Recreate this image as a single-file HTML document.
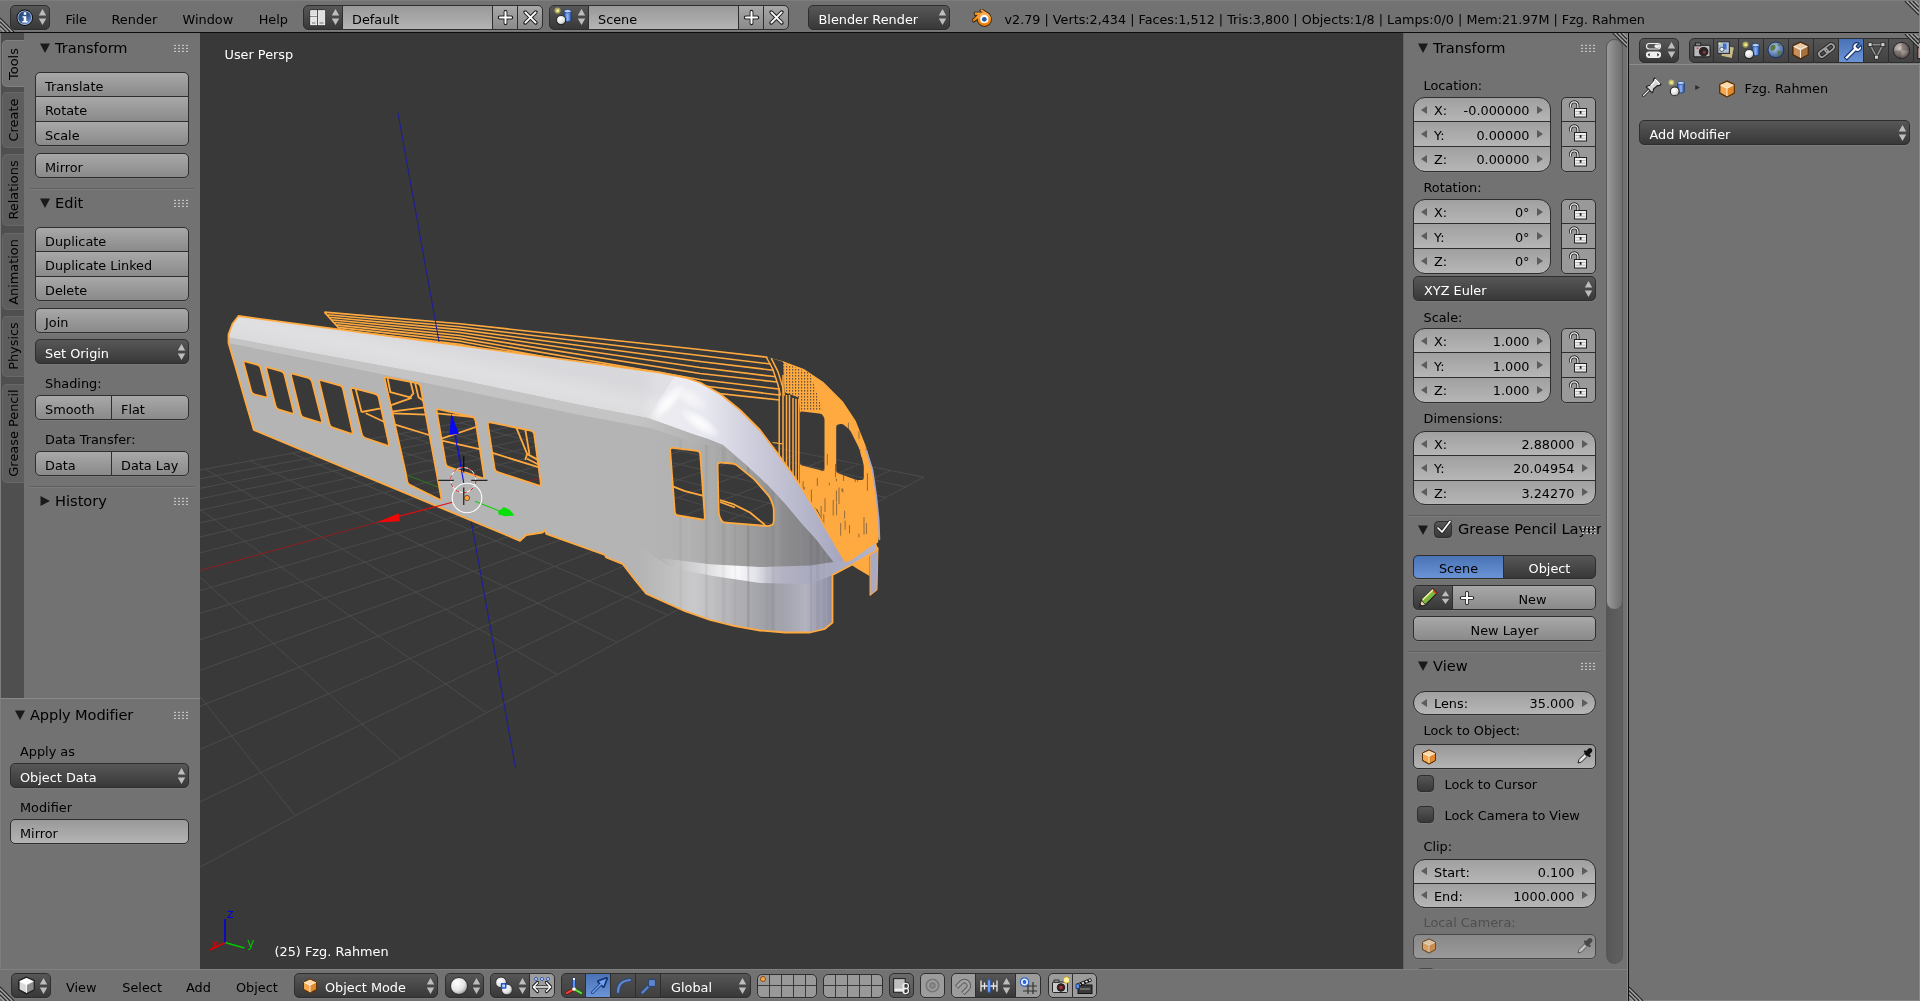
<!DOCTYPE html><html><head><meta charset="utf-8"><title>Blender</title><style>
*{box-sizing:border-box}
html,body{margin:0;padding:0}
body{width:1920px;height:1001px;position:relative;overflow:hidden;background:#727272;font-family:"DejaVu Sans","Liberation Sans",sans-serif;font-size:12.85px;color:#000;line-height:1}
.a{position:absolute}
.w{position:absolute;border:1px solid #2e2e2e;white-space:nowrap;overflow:hidden;display:flex;align-items:center;box-shadow:0 1px 0 rgba(255,255,255,.06)}
.tool{background:linear-gradient(#a8a8a8,#8a8a8a)}
.num{background:linear-gradient(#a0a0a0,#b6b6b6)}
.menu{background:linear-gradient(#575757,#383838);color:#fff}
.txt{background:linear-gradient(#999,#b4b4b4)}
.tog{background:#999}
.sel{background:linear-gradient(#4a72b6,#6a94d6)}
.chk{background:linear-gradient(#565656,#383838)}
.lbl{position:absolute;white-space:nowrap;height:20px;line-height:20px}
.ph{position:absolute;white-space:nowrap;font-size:14.6px;height:20px;line-height:20px}
.sep{position:absolute;height:1px;background:#5e5e5e;box-shadow:0 1px 0 #7c7c7c}
.tab{position:absolute;left:2px;width:22px;background:#5d5d5d;border:1px solid #686868;border-right:none;border-radius:5px 0 0 5px}
.tab span{position:absolute;left:50%;top:50%;white-space:nowrap;transform:translate(-50%,-50%) rotate(-90deg);font-size:12.9px;margin-left:.7px}
.tab.on{background:#727272;border-color:#808080}
.ud{position:absolute;width:9px;height:15px}
</style></head><body><div id="root" style="position:absolute;left:0;top:0;width:1920px;height:1001px;will-change:transform"><svg width="0" height="0" style="position:absolute"><defs>
<linearGradient id="gInfo" x1="0" y1="0" x2=".6" y2="1"><stop offset="0" stop-color="#1f3f78"/><stop offset=".6" stop-color="#33568e"/><stop offset="1" stop-color="#6a8ec8"/></linearGradient>
<radialGradient id="gSph" cx=".38" cy=".32" r=".75"><stop offset="0" stop-color="#fff"/><stop offset=".6" stop-color="#e4e4e4"/><stop offset="1" stop-color="#8c8c8c"/></radialGradient>
<radialGradient id="gSphD" cx=".38" cy=".32" r=".75"><stop offset="0" stop-color="#bbb"/><stop offset="1" stop-color="#4a4a4a"/></radialGradient>
<linearGradient id="gCyl" x1="0" x2="1"><stop offset="0" stop-color="#2d59b8"/><stop offset=".5" stop-color="#8db4f4"/><stop offset="1" stop-color="#2a4f9d"/></linearGradient>
<radialGradient id="gEarth" cx=".4" cy=".35" r=".75"><stop offset="0" stop-color="#b4c8e2"/><stop offset=".6" stop-color="#5f80b4"/><stop offset="1" stop-color="#2c4470"/></radialGradient>
<radialGradient id="gMat" cx=".4" cy=".35" r=".75"><stop offset="0" stop-color="#d0c4c0"/><stop offset=".6" stop-color="#8c807c"/><stop offset="1" stop-color="#3c3434"/></radialGradient>
<linearGradient id="gBl" x1="0" y1="0" x2="0" y2="1"><stop offset="0" stop-color="#fbb868"/><stop offset=".5" stop-color="#f4901e"/><stop offset="1" stop-color="#ea7a00"/></linearGradient>
</defs></svg>
<div class="a" style="left:200px;top:33px;width:1203px;height:936px;background:#393939;overflow:hidden">
<svg style="position:absolute;left:-200px;top:-33px" width="1920" height="1001" viewBox="0 0 1920 1001" font-family="DejaVu Sans, Liberation Sans, sans-serif">
<defs>
<linearGradient id="roofG" gradientUnits="userSpaceOnUse" x1="400" y1="337" x2="391" y2="379"><stop offset="0" stop-color="#d4d4d8" stop-opacity=".5"/><stop offset=".4" stop-color="#e4e4e6" stop-opacity=".3"/><stop offset="1" stop-color="#cfcfd1" stop-opacity=".5"/></linearGradient><linearGradient id="lightG" gradientUnits="userSpaceOnUse" x1="228" y1="0" x2="845" y2="0"><stop offset="0" stop-color="#dedee1"/><stop offset=".67" stop-color="#dddde0"/><stop offset=".70" stop-color="#ebebf0"/><stop offset=".77" stop-color="#e9e9f1"/><stop offset=".85" stop-color="#cdcddc"/><stop offset=".93" stop-color="#b8b8cc"/><stop offset="1" stop-color="#a4a4be"/></linearGradient><linearGradient id="stripG" gradientUnits="userSpaceOnUse" x1="228" y1="0" x2="845" y2="0"><stop offset="0" stop-color="#c4c4c5"/><stop offset=".66" stop-color="#c4c4c5"/><stop offset=".73" stop-color="#b8b8b9"/><stop offset=".82" stop-color="#a4a4a6"/><stop offset=".92" stop-color="#909094"/><stop offset="1" stop-color="#88888e"/></linearGradient>
<linearGradient id="noseG" gradientUnits="userSpaceOnUse" x1="650" y1="0" x2="835" y2="0"><stop offset="0" stop-color="#b4b4b4"/><stop offset=".25" stop-color="#b0b0b0"/><stop offset=".5" stop-color="#a0a0a1"/><stop offset=".75" stop-color="#8b8b8e"/><stop offset="1" stop-color="#7a7a82"/></linearGradient>
<linearGradient id="skirtG" gradientUnits="userSpaceOnUse" x1="640" y1="0" x2="835" y2="0"><stop offset="0" stop-color="#b4b4b4"/><stop offset=".28" stop-color="#c9c9cb"/><stop offset=".5" stop-color="#b0b0b4"/><stop offset=".68" stop-color="#9c9ca4"/><stop offset=".85" stop-color="#b2b2c0"/><stop offset="1" stop-color="#8888a0"/></linearGradient>
<linearGradient id="beltG" gradientUnits="userSpaceOnUse" x1="660" y1="0" x2="878" y2="0"><stop offset="0" stop-color="#b4b4b4"/><stop offset=".18" stop-color="#d6d6d8"/><stop offset=".35" stop-color="#fafafc"/><stop offset=".44" stop-color="#e2e2ea"/><stop offset=".53" stop-color="#b4b4c4"/><stop offset=".75" stop-color="#a6a6bc"/><stop offset="1" stop-color="#b4b4cc"/></linearGradient>

<radialGradient id="hiS"><stop offset="0" stop-color="#fff" stop-opacity=".95"/><stop offset=".5" stop-color="#fff" stop-opacity=".6"/><stop offset="1" stop-color="#fff" stop-opacity="0"/></radialGradient>
<pattern id="dots" width="3" height="3" patternUnits="userSpaceOnUse"><rect x="0" y="0" width="1.2" height="1.6" fill="#393939" opacity=".75"/></pattern>
</defs>
<path d="M559.0 404.8 L923.8 477.1 M559.0 404.8 L-96.2 523.7 M536.5 408.9 L905.9 486.8 M574.4 407.8 L-94.2 534.4 M512.5 413.2 L886.2 497.4 M590.4 411.0 L-92.0 546.1 M487.1 417.8 L864.6 509.0 M607.1 414.3 L-89.7 558.9 M459.9 422.8 L840.6 521.9 M624.7 417.8 L-87.1 572.8 M430.9 428.0 L813.9 536.3 M643.1 421.4 L-84.2 588.1 M399.9 433.7 L784.0 552.5 M662.3 425.3 L-81.1 605.1 M366.6 439.7 L750.3 570.6 M682.6 429.3 L-77.6 623.9 M292.1 453.2 L667.9 615.0 M726.3 437.9 L-69.3 668.6 M250.3 460.8 L617.0 642.4 M749.9 442.6 L-64.3 695.5 M204.9 469.0 L557.3 674.6 M774.8 447.6 L-58.6 726.1 M155.5 478.0 L486.4 712.8 M801.2 452.8 L-52.0 761.4 M101.4 487.8 L400.7 759.0 M829.1 458.3 L-44.4 802.6 M42.0 498.6 L295.2 815.8 M858.8 464.2 L-35.3 851.3 M-23.5 510.5 L162.1 887.6 M890.3 470.5 L-24.5 909.7 M-96.2 523.7 L-11.2 981.0 M923.8 477.1 L-11.2 981.0" stroke="#4b4b4b" stroke-width="1" fill="none"/><path d="M703.9 433.5 L-73.7 645.0" stroke="#8e1f1f" stroke-width="1"/><path d="M330.8 446.2 L711.9 591.3" stroke="#2a7a1e" stroke-width="1"/>
<path d="M324.4 312.1 L460.0 323.8 L700.0 349.5 L767.5 357.3 M326.7 314.7 L460.0 326.7 L700.0 355.5 L770.8 364.0 M329.0 317.2 L460.0 329.6 L700.0 361.5 L773.4 370.3 M331.3 319.8 L460.0 332.5 L700.0 367.5 L775.6 376.8 M333.6 322.3 L460.0 335.5 L700.0 373.5 L777.0 382.0 M335.9 324.9 L460.0 338.4 L700.0 379.5 L778.3 389.0 M338.2 327.4 L460.0 341.3 L700.0 385.5 L779.2 395.0 M340.5 330.0 L460.0 344.3 L700.0 391.5 L779.5 400.0 M324.4 312.1 L340.5 330" stroke="#ffaa40" stroke-width="1.6" fill="none"/>
<path d="M766.2 357.0 L772.7 369.0 L777.9 384.5 L780.5 395.6 M771.2 358.1 L777.9 371.6 L783.1 388.4 L784.4 395.6" stroke="#ffaa40" stroke-width="1.5" fill="none"/>
<clipPath id="farclip"><path d="M767.5 357.3 L783.1 361.2 L803.9 369.0 L823.4 381.9 L842.9 401.4 L855.8 420.9 L866.2 446.9 L872.5 470.0 L876.2 495.0 L878.8 520.0 L879.5 540.0 L880.0 530.0 L878.0 542.5 L850.0 560.0 L842.5 560.0 L835.0 547.5 L817.5 510.0 L806.2 500.0 L800.0 490.0 L800.0 411.2 L798.8 397.5 L784.5 392.2 L783.0 361.8 Z"/></clipPath>
<path d="M767.5 357.3 L783.1 361.2 L803.9 369.0 L823.4 381.9 L842.9 401.4 L855.8 420.9 L866.2 446.9 L872.5 470.0 L876.2 495.0 L878.8 520.0 L879.5 540.0 L880.0 530.0 L878.0 542.5 L850.0 560.0 L842.5 560.0 L835.0 547.5 L817.5 510.0 L806.2 500.0 L800.0 490.0 L800.0 411.2 L798.8 397.5 L784.5 392.2 L783.0 361.8 Z M800.0 413.2 Q800.0 411.2 802.0 411.5 L819.3 413.5 Q821.2 413.8 822.6 415.3 L823.2 416.0 Q824.5 417.5 824.5 419.5 L824.5 469.2 Q824.5 471.2 822.6 470.8 L801.9 465.5 Q800.0 465.0 800.0 463.0 Z M836.2 427.0 Q836.2 425.0 838.2 424.6 L840.5 424.1 Q842.5 423.8 844.0 425.0 L848.5 428.7 Q850.0 430.0 850.9 431.8 L857.9 445.7 Q858.8 447.5 859.3 449.4 L863.2 463.1 Q863.8 465.0 863.8 467.0 L863.8 478.0 Q863.8 480.0 861.8 480.0 L858.2 480.0 Q856.2 480.0 854.4 479.3 L838.1 473.2 Q836.2 472.5 836.2 470.5 Z" fill="#ffaa40" fill-rule="evenodd"/>
<path d="M783.0 362.5 L810.0 373.0 L822.5 410.0 L800.0 411.2 L798.8 397.5 L784.5 392.2 Z" fill="url(#dots)"/>
<path d="M779.2 388.0 L779.2 507.5 M783.0 375.0 L783.0 507.5 M786.5 395.0 L786.5 507.5 M789.5 395.0 L789.5 507.5 M793.0 398.0 L793.0 507.5 M796.0 398.8 L796.0 507.5 M798.8 398.8 L798.8 507.5" stroke="#ffaa40" stroke-width="1.5" fill="none"/>
<path d="M772.5 442.5 L782.5 443.8 M793.8 512.5 L807.5 517.5" stroke="#ffaa40" stroke-width="1.2"/>
<path d="M817.3 478.0 v8.0 M842.0 488.2 v3.5 M802.1 514.7 v6.4 M817.1 534.5 v9.6 M857.7 469.5 v12.1 M811.4 489.4 v15.5 M836.6 502.7 v12.6 M805.6 504.8 v11.4 M821.6 413.9 v15.5 M833.2 499.9 v15.7 M849.5 525.1 v8.4 M855.3 465.6 v16.5 M860.6 422.2 v4.5 M815.9 530.7 v9.0 M843.5 447.6 v10.1 M827.3 453.9 v11.3 M840.7 523.0 v12.7 M864.0 517.1 v17.4 M846.6 430.4 v15.4 M866.4 523.1 v11.0 M849.4 436.4 v15.0 M840.0 445.6 v3.5 M858.9 533.7 v3.8 M855.3 461.3 v4.8 M821.1 506.1 v15.6 M804.2 486.8 v3.2 M849.7 451.4 v15.7 M867.4 473.2 v17.5 M822.2 419.6 v11.5 M803.4 434.7 v8.6 M842.5 429.5 v3.1 M859.8 449.2 v16.9 M861.8 457.2 v9.4 M836.4 490.5 v11.4 M839.0 487.5 v16.6 M835.5 463.9 v13.3 M817.3 447.6 v17.2 M836.4 478.6 v2.7 M829.3 482.5 v2.8 M842.8 489.0 v3.4 M843.6 468.3 v12.7 M825.0 498.4 v13.6 M802.7 417.6 v12.6 M866.3 441.4 v9.3 M841.3 450.0 v8.0 M822.4 456.1 v11.4 M821.5 457.1 v14.1 M803.1 481.2 v13.5 M822.2 437.8 v14.6 M817.4 433.4 v9.0 M848.4 422.7 v7.3 M823.8 514.2 v9.1 M859.0 431.2 v7.6 M845.1 520.6 v9.3 M816.4 425.1 v10.4 M814.1 510.8 v15.1 M813.6 444.8 v14.6 M844.6 510.8 v7.7 M810.0 446.5 v14.4 M819.6 453.3 v8.8" stroke="#3a3a3a" stroke-width=".7" fill="none" opacity=".8" clip-path="url(#farclip)"/>
<path d="M849.5 563.5 L869.5 554 L869.5 576 L856 568 Z" fill="#ffaa40"/>
<path d="M866.2 450.0 L872.5 470.0 L876.2 495.0 L878.8 520.0 L879.5 540.0" stroke="#a6a6c6" stroke-width="1.6" fill="none"/>
<path d="M870.0 551.2 L878.0 547.5 L877.0 590.0 L870.0 595.5 Z" fill="#a9a9c4" stroke="#ffaa40" stroke-width="1"/>
<path d="M398 113 L515.5 768" stroke="#1c1c9c" stroke-width="1"/>
<path d="M357.4 388.9 L376.0 393.0 L379.0 397.0 L382.0 410.2 M361.6 412.0 L382.0 408.1 M365.8 413.2 L385.0 422.2 M355.6 388.6 L361.6 412.2 M387.4 377.2 L390.4 392.2 L410.1 397.3 L413.4 393.4 L410.5 381.8 M414.9 382.0 L418.5 397.3 L423.7 400.9 M389.8 405.7 L411.7 397.8 M391.3 411.7 L424.5 407.4 M391.8 413.4 L426.1 414.6 M393.6 424.2 L429.0 435.0 M436.5 413.4 L473.3 417.0 M440.7 438.9 L476.1 427.0 M441.9 440.7 L479.7 449.1 M516.3 427.6 L527.1 453.9 L537.8 459.9 M525.3 429.4 L529.4 453.9 M527.1 458.7 L539.3 465.0 M491.7 452.7 L539.0 467.4 M527.1 453.9 L525.3 459.9 M672.0 486.2 L685.0 491.2 L704.5 496.2 M720.0 500.0 L732.5 503.8 L750.0 512.5 L765.0 525.0 M720.0 502.0 L735.0 507.5" stroke="#ffaa40" stroke-width="1.8" fill="none" stroke-linejoin="round"/>
<clipPath id="bodyclip" clip-rule="evenodd"><path d="M238.5 316.0 L560.0 358.8 L660.0 372.5 L685.0 377.5 L700.0 382.5 L720.0 393.8 L740.0 410.0 L760.0 430.0 L777.0 452.5 L792.0 473.5 L804.0 491.5 L816.0 511.0 L828.0 532.0 L838.5 550.0 L845.0 561.0 L850.0 560.0 L875.0 542.5 L877.5 550.0 L853.8 563.8 L832.5 575.0 L832.5 622.5 L825.0 628.8 L810.0 632.5 L785.0 632.5 L760.0 630.5 L735.0 626.2 L710.0 620.0 L685.0 611.2 L660.0 600.0 L646.2 593.8 L635.0 580.0 L622.5 563.8 L606.2 557.5 L605.0 555.0 L546.2 533.8 L545.0 530.0 L542.5 532.5 L526.2 535.0 L520.0 540.8 L253.8 430.0 L245.0 400.0 L235.0 365.0 L228.5 343.0 L228.5 334.4 L232.5 323.8 Z M243.8 363.6 Q243.0 360.8 245.9 361.6 L257.1 364.7 Q260.0 365.5 260.7 368.4 L267.3 395.1 Q268.0 398.0 265.1 397.2 L254.9 394.5 Q252.0 393.8 251.2 390.9 Z M266.5 369.7 Q265.8 366.8 268.6 367.6 L280.9 371.2 Q283.8 372.0 284.5 374.9 L293.5 411.3 Q294.2 414.2 291.4 413.4 L279.1 409.6 Q276.2 408.8 275.5 405.8 Z M291.2 375.9 Q290.5 373.0 293.4 373.8 L308.4 377.9 Q311.2 378.8 312.0 381.7 L321.8 420.3 Q322.5 423.2 319.6 422.4 L304.1 417.6 Q301.2 416.8 300.5 413.8 Z M319.4 382.4 Q318.8 379.5 321.6 380.3 L339.6 385.4 Q342.5 386.2 343.1 389.2 L352.4 431.3 Q353.0 434.2 350.1 433.3 L332.9 427.7 Q330.0 426.8 329.3 423.8 Z M351.2 390.4 Q350.5 387.5 353.4 388.2 L375.1 393.8 Q378.0 394.5 378.7 397.4 L388.8 443.3 Q389.5 446.2 386.7 445.3 L365.3 438.0 Q362.5 437.0 361.8 434.1 Z M384.9 379.7 Q384.2 376.8 387.2 377.3 L417.1 383.2 Q420.0 383.8 420.5 386.7 L441.2 497.6 Q441.8 500.5 439.1 499.2 L410.2 485.1 Q407.5 483.8 407.1 480.8 L406.7 478.0 Q406.2 475.0 405.6 472.1 Z M436.8 411.7 Q436.2 408.8 439.2 409.4 L472.1 416.8 Q475.0 417.5 475.5 420.5 L484.0 475.8 Q484.5 478.8 481.6 477.8 L449.1 467.2 Q446.2 466.2 445.7 463.3 Z M487.9 424.7 Q487.5 421.8 490.4 422.4 L530.8 430.6 Q533.8 431.2 534.2 434.2 L540.8 483.3 Q541.2 486.2 538.4 485.3 L497.9 472.2 Q495.0 471.2 494.6 468.3 Z M670.2 450.5 Q670.0 447.5 673.0 447.9 L697.0 450.9 Q700.0 451.2 700.2 454.2 L704.8 517.0 Q705.0 520.0 702.0 519.5 L678.0 515.5 Q675.0 515.0 674.8 512.0 Z M717.6 465.5 Q717.5 462.5 720.5 462.7 L732.0 463.5 Q735.0 463.8 737.3 465.6 L752.7 478.1 Q755.0 480.0 757.0 482.3 L768.0 495.2 Q770.0 497.5 771.1 500.3 L772.7 504.7 Q773.8 507.5 773.8 510.5 L773.8 520.8 Q773.8 523.8 772.1 524.9 L771.7 525.1 Q770.0 526.2 767.0 526.0 L725.5 522.7 Q722.5 522.5 721.2 519.8 L720.1 517.7 Q718.8 515.0 718.7 512.0 Z" clip-rule="evenodd"/></clipPath>
<path d="M238.5 316.0 L560.0 358.8 L660.0 372.5 L685.0 377.5 L700.0 382.5 L720.0 393.8 L740.0 410.0 L760.0 430.0 L777.0 452.5 L792.0 473.5 L804.0 491.5 L816.0 511.0 L828.0 532.0 L838.5 550.0 L845.0 561.0 L850.0 560.0 L875.0 542.5 L877.5 550.0 L853.8 563.8 L832.5 575.0 L832.5 622.5 L825.0 628.8 L810.0 632.5 L785.0 632.5 L760.0 630.5 L735.0 626.2 L710.0 620.0 L685.0 611.2 L660.0 600.0 L646.2 593.8 L635.0 580.0 L622.5 563.8 L606.2 557.5 L605.0 555.0 L546.2 533.8 L545.0 530.0 L542.5 532.5 L526.2 535.0 L520.0 540.8 L253.8 430.0 L245.0 400.0 L235.0 365.0 L228.5 343.0 L228.5 334.4 L232.5 323.8 Z M243.8 363.6 Q243.0 360.8 245.9 361.6 L257.1 364.7 Q260.0 365.5 260.7 368.4 L267.3 395.1 Q268.0 398.0 265.1 397.2 L254.9 394.5 Q252.0 393.8 251.2 390.9 Z M266.5 369.7 Q265.8 366.8 268.6 367.6 L280.9 371.2 Q283.8 372.0 284.5 374.9 L293.5 411.3 Q294.2 414.2 291.4 413.4 L279.1 409.6 Q276.2 408.8 275.5 405.8 Z M291.2 375.9 Q290.5 373.0 293.4 373.8 L308.4 377.9 Q311.2 378.8 312.0 381.7 L321.8 420.3 Q322.5 423.2 319.6 422.4 L304.1 417.6 Q301.2 416.8 300.5 413.8 Z M319.4 382.4 Q318.8 379.5 321.6 380.3 L339.6 385.4 Q342.5 386.2 343.1 389.2 L352.4 431.3 Q353.0 434.2 350.1 433.3 L332.9 427.7 Q330.0 426.8 329.3 423.8 Z M351.2 390.4 Q350.5 387.5 353.4 388.2 L375.1 393.8 Q378.0 394.5 378.7 397.4 L388.8 443.3 Q389.5 446.2 386.7 445.3 L365.3 438.0 Q362.5 437.0 361.8 434.1 Z M384.9 379.7 Q384.2 376.8 387.2 377.3 L417.1 383.2 Q420.0 383.8 420.5 386.7 L441.2 497.6 Q441.8 500.5 439.1 499.2 L410.2 485.1 Q407.5 483.8 407.1 480.8 L406.7 478.0 Q406.2 475.0 405.6 472.1 Z M436.8 411.7 Q436.2 408.8 439.2 409.4 L472.1 416.8 Q475.0 417.5 475.5 420.5 L484.0 475.8 Q484.5 478.8 481.6 477.8 L449.1 467.2 Q446.2 466.2 445.7 463.3 Z M487.9 424.7 Q487.5 421.8 490.4 422.4 L530.8 430.6 Q533.8 431.2 534.2 434.2 L540.8 483.3 Q541.2 486.2 538.4 485.3 L497.9 472.2 Q495.0 471.2 494.6 468.3 Z M670.2 450.5 Q670.0 447.5 673.0 447.9 L697.0 450.9 Q700.0 451.2 700.2 454.2 L704.8 517.0 Q705.0 520.0 702.0 519.5 L678.0 515.5 Q675.0 515.0 674.8 512.0 Z M717.6 465.5 Q717.5 462.5 720.5 462.7 L732.0 463.5 Q735.0 463.8 737.3 465.6 L752.7 478.1 Q755.0 480.0 757.0 482.3 L768.0 495.2 Q770.0 497.5 771.1 500.3 L772.7 504.7 Q773.8 507.5 773.8 510.5 L773.8 520.8 Q773.8 523.8 772.1 524.9 L771.7 525.1 Q770.0 526.2 767.0 526.0 L725.5 522.7 Q722.5 522.5 721.2 519.8 L720.1 517.7 Q718.8 515.0 718.7 512.0 Z" fill="#b4b4b4" fill-rule="evenodd"/>
<g clip-path="url(#bodyclip)"><clipPath id="sideclip"><path d="M650.0 428.1 L675.0 436.2 L700.0 444.0 L723.0 447.0 L745.5 464.5 L768.0 485.5 L786.0 505.0 L801.0 523.0 L816.0 539.5 L827.0 554.0 L835.0 564.0 L832.5 575.0 L810.0 583.8 L760.0 582.5 L710.0 575.0 L672.5 567.5 L655.0 557.5 L635.0 525.0 L640.0 440.0 Z M635.0 540.0 L655.0 557.5 L672.5 567.5 L710.0 575.0 L760.0 582.5 L810.0 583.8 L832.5 575.0 L832.5 622.5 L825.0 628.8 L810.0 632.5 L785.0 632.5 L760.0 630.5 L735.0 626.2 L710.0 620.0 L685.0 611.2 L660.0 600.0 L646.2 593.8 L635.0 580.0 Z"/></clipPath>
<path d="M238.5 316.0 L560.0 358.8 L660.0 372.5 L685.0 377.5 L700.0 382.5 L720.0 393.8 L740.0 410.0 L760.0 430.0 L777.0 452.5 L792.0 473.5 L804.0 491.5 L816.0 511.0 L828.0 532.0 L838.5 550.0 L845.0 561.0 L835.0 564.0 L827.0 554.0 L816.0 539.5 L801.0 523.0 L786.0 505.0 L768.0 485.5 L745.5 464.5 L723.0 445.0 L708.0 439.0 L692.5 434.0 L667.5 425.0 L647.5 418.1 L580.0 405.0 L460.0 380.0 L228.5 337.5 L228.5 334.4 L232.5 323.8 Z" fill="url(#lightG)"/>
<path d="M238.5 316.0 L560.0 358.8 L660.0 372.5 L675.0 376.0 L647.5 418.1 L580.0 405.0 L460.0 380.0 L228.5 337.5 L228.5 334.4 L232.5 323.8 Z" fill="url(#roofG)"/>
<path d="M228.5 337.5 L460.0 380.0 L580.0 405.0 L647.5 418.1 L667.5 425.0 L692.5 434.0 L708.0 439.0 L723.0 445.0 L745.5 464.5 L768.0 485.5 L786.0 505.0 L801.0 523.0 L816.0 539.5 L827.0 554.0 L835.0 564.0 L723.0 447.0 L700.0 444.0 L675.0 436.2 L650.0 428.1 L580.0 415.0 L460.0 390.0 L228.5 343.0 Z" fill="url(#stripG)"/>
<path d="M650.0 428.1 L675.0 436.2 L700.0 444.0 L723.0 447.0 L745.5 464.5 L768.0 485.5 L786.0 505.0 L801.0 523.0 L816.0 539.5 L827.0 554.0 L835.0 564.0 L832.5 575.0 L810.0 583.8 L760.0 582.5 L710.0 575.0 L672.5 567.5 L655.0 557.5 L635.0 525.0 L640.0 440.0 Z" fill="url(#noseG)"/>
<ellipse cx="668" cy="402" rx="25" ry="8" transform="rotate(-48 668 402)" fill="url(#hiS)"/>
<ellipse cx="700" cy="423" rx="24" ry="8" transform="rotate(34 700 423)" fill="url(#hiS)"/>
<ellipse cx="690" cy="398" rx="20" ry="9" transform="rotate(30 690 398)" fill="url(#hiS)" opacity=".6"/>
<path d="M635.0 540.0 L655.0 557.5 L672.5 567.5 L710.0 575.0 L760.0 582.5 L810.0 583.8 L832.5 575.0 L832.5 622.5 L825.0 628.8 L810.0 632.5 L785.0 632.5 L760.0 630.5 L735.0 626.2 L710.0 620.0 L685.0 611.2 L660.0 600.0 L646.2 593.8 L635.0 580.0 Z" fill="url(#skirtG)"/>
<path d="M660.0 558.0 L710.0 564.2 L760.0 567.0 L810.0 565.5 L830.0 562.5 L850.0 560.0 L875.0 542.5 L877.5 550.0 L853.8 563.8 L832.5 575.0 L810.0 584.2 L760.0 583.0 L710.0 575.5 L672.5 568.0 Z" fill="url(#beltG)"/>
<path d="M720.5 440 V640" stroke="#fff" stroke-opacity="0.03" stroke-width="1.6" clip-path="url(#sideclip)"/>
<path d="M801.0 440 V640" stroke="#fff" stroke-opacity="0.03" stroke-width="1.6" clip-path="url(#sideclip)"/>
<path d="M750.2 440 V640" stroke="#fff" stroke-opacity="0.02" stroke-width="2.5" clip-path="url(#sideclip)"/>
<path d="M707.0 440 V640" stroke="#000" stroke-opacity="0.02" stroke-width="2.9" clip-path="url(#sideclip)"/>
<path d="M821.5 440 V640" stroke="#fff" stroke-opacity="0.04" stroke-width="2.5" clip-path="url(#sideclip)"/>
<path d="M826.2 440 V640" stroke="#fff" stroke-opacity="0.04" stroke-width="1.8" clip-path="url(#sideclip)"/>
<path d="M735.9 440 V640" stroke="#fff" stroke-opacity="0.04" stroke-width="2.9" clip-path="url(#sideclip)"/>
<path d="M778.5 440 V640" stroke="#fff" stroke-opacity="0.04" stroke-width="3.1" clip-path="url(#sideclip)"/>
<path d="M728.3 440 V640" stroke="#fff" stroke-opacity="0.04" stroke-width="3.0" clip-path="url(#sideclip)"/>
<path d="M748.4 440 V640" stroke="#000" stroke-opacity="0.05" stroke-width="2.7" clip-path="url(#sideclip)"/>
<path d="M817.6 440 V640" stroke="#000" stroke-opacity="0.03" stroke-width="3.5" clip-path="url(#sideclip)"/>
<path d="M781.2 440 V640" stroke="#fff" stroke-opacity="0.02" stroke-width="2.3" clip-path="url(#sideclip)"/>
<path d="M748.2 440 V640" stroke="#000" stroke-opacity="0.05" stroke-width="2.2" clip-path="url(#sideclip)"/>
<path d="M826.8 440 V640" stroke="#fff" stroke-opacity="0.04" stroke-width="1.9" clip-path="url(#sideclip)"/>
<path d="M723.4 440 V640" stroke="#000" stroke-opacity="0.03" stroke-width="3.9" clip-path="url(#sideclip)"/>
<path d="M680.6 440 V640" stroke="#000" stroke-opacity="0.03" stroke-width="2.4" clip-path="url(#sideclip)"/>
<path d="M748.5 440 V640" stroke="#000" stroke-opacity="0.02" stroke-width="1.7" clip-path="url(#sideclip)"/>
<path d="M711.7 440 V640" stroke="#fff" stroke-opacity="0.02" stroke-width="3.3" clip-path="url(#sideclip)"/>
<path d="M772.8 440 V640" stroke="#000" stroke-opacity="0.03" stroke-width="2.5" clip-path="url(#sideclip)"/>
<path d="M776.3 440 V640" stroke="#fff" stroke-opacity="0.05" stroke-width="2.4" clip-path="url(#sideclip)"/>
<path d="M767.0 440 V640" stroke="#000" stroke-opacity="0.02" stroke-width="3.4" clip-path="url(#sideclip)"/>
<path d="M689.0 440 V640" stroke="#fff" stroke-opacity="0.03" stroke-width="3.8" clip-path="url(#sideclip)"/>
<path d="M748.4 440 V640" stroke="#fff" stroke-opacity="0.04" stroke-width="2.9" clip-path="url(#sideclip)"/>
<path d="M811.1 440 V640" stroke="#000" stroke-opacity="0.05" stroke-width="2.2" clip-path="url(#sideclip)"/>
<path d="M735.3 440 V640" stroke="#000" stroke-opacity="0.04" stroke-width="2.5" clip-path="url(#sideclip)"/>
<path d="M705.4 440 V640" stroke="#fff" stroke-opacity="0.03" stroke-width="2.1" clip-path="url(#sideclip)"/>
<path d="M705.8 440 V640" stroke="#000" stroke-opacity="0.05" stroke-width="2.0" clip-path="url(#sideclip)"/>
<path d="M713.7 440 V640" stroke="#fff" stroke-opacity="0.03" stroke-width="2.4" clip-path="url(#sideclip)"/></g>
<path d="M238.5 316.0 L560.0 358.8 L660.0 372.5 L685.0 377.5 L700.0 382.5 L720.0 393.8 L740.0 410.0 L760.0 430.0 L777.0 452.5 L792.0 473.5 L804.0 491.5 L816.0 511.0 L828.0 532.0 L838.5 550.0 L845.0 561.0 L850.0 560.0 L875.0 542.5 L877.5 550.0 L853.8 563.8 L832.5 575.0 L832.5 622.5 L825.0 628.8 L810.0 632.5 L785.0 632.5 L760.0 630.5 L735.0 626.2 L710.0 620.0 L685.0 611.2 L660.0 600.0 L646.2 593.8 L635.0 580.0 L622.5 563.8 L606.2 557.5 L605.0 555.0 L546.2 533.8 L545.0 530.0 L542.5 532.5 L526.2 535.0 L520.0 540.8 L253.8 430.0 L245.0 400.0 L235.0 365.0 L228.5 343.0 L228.5 334.4 L232.5 323.8 Z M243.8 363.6 Q243.0 360.8 245.9 361.6 L257.1 364.7 Q260.0 365.5 260.7 368.4 L267.3 395.1 Q268.0 398.0 265.1 397.2 L254.9 394.5 Q252.0 393.8 251.2 390.9 Z M266.5 369.7 Q265.8 366.8 268.6 367.6 L280.9 371.2 Q283.8 372.0 284.5 374.9 L293.5 411.3 Q294.2 414.2 291.4 413.4 L279.1 409.6 Q276.2 408.8 275.5 405.8 Z M291.2 375.9 Q290.5 373.0 293.4 373.8 L308.4 377.9 Q311.2 378.8 312.0 381.7 L321.8 420.3 Q322.5 423.2 319.6 422.4 L304.1 417.6 Q301.2 416.8 300.5 413.8 Z M319.4 382.4 Q318.8 379.5 321.6 380.3 L339.6 385.4 Q342.5 386.2 343.1 389.2 L352.4 431.3 Q353.0 434.2 350.1 433.3 L332.9 427.7 Q330.0 426.8 329.3 423.8 Z M351.2 390.4 Q350.5 387.5 353.4 388.2 L375.1 393.8 Q378.0 394.5 378.7 397.4 L388.8 443.3 Q389.5 446.2 386.7 445.3 L365.3 438.0 Q362.5 437.0 361.8 434.1 Z M384.9 379.7 Q384.2 376.8 387.2 377.3 L417.1 383.2 Q420.0 383.8 420.5 386.7 L441.2 497.6 Q441.8 500.5 439.1 499.2 L410.2 485.1 Q407.5 483.8 407.1 480.8 L406.7 478.0 Q406.2 475.0 405.6 472.1 Z M436.8 411.7 Q436.2 408.8 439.2 409.4 L472.1 416.8 Q475.0 417.5 475.5 420.5 L484.0 475.8 Q484.5 478.8 481.6 477.8 L449.1 467.2 Q446.2 466.2 445.7 463.3 Z M487.9 424.7 Q487.5 421.8 490.4 422.4 L530.8 430.6 Q533.8 431.2 534.2 434.2 L540.8 483.3 Q541.2 486.2 538.4 485.3 L497.9 472.2 Q495.0 471.2 494.6 468.3 Z M670.2 450.5 Q670.0 447.5 673.0 447.9 L697.0 450.9 Q700.0 451.2 700.2 454.2 L704.8 517.0 Q705.0 520.0 702.0 519.5 L678.0 515.5 Q675.0 515.0 674.8 512.0 Z M717.6 465.5 Q717.5 462.5 720.5 462.7 L732.0 463.5 Q735.0 463.8 737.3 465.6 L752.7 478.1 Q755.0 480.0 757.0 482.3 L768.0 495.2 Q770.0 497.5 771.1 500.3 L772.7 504.7 Q773.8 507.5 773.8 510.5 L773.8 520.8 Q773.8 523.8 772.1 524.9 L771.7 525.1 Q770.0 526.2 767.0 526.0 L725.5 522.7 Q722.5 522.5 721.2 519.8 L720.1 517.7 Q718.8 515.0 718.7 512.0 Z" fill="none" stroke="#ffaa40" stroke-width="1.8" stroke-linejoin="round"/>
<path d="M452.5 502.3 L398 516.5" stroke="#e01010" stroke-width="1.1"/>
<path d="M376.2 522.5 L398.7 513.6 L400 521.2 Z" fill="#f00808"/>
<path d="M475 501.2 L500 511.2" stroke="#10d010" stroke-width="1.1"/>
<path d="M498 512 L503.700 507 L510 510 L514.500 515.500 L505 516.200 L498.700 514.500 Z" fill="#08e008"/>
<path d="M463.8 483 L455 435" stroke="#1010e0" stroke-width="1.1"/>
<path d="M451.2 413.7 L449.5 435 L459 433.8 Z" fill="#0808f0"/>
<circle cx="463.3" cy="480" r="12.6" fill="none" stroke="#fff" stroke-width="1"/>
<circle cx="463.3" cy="480" r="12.6" fill="none" stroke="#e02020" stroke-width="1" stroke-dasharray="4 4"/>
<path d="M438.2 480.300 H453.8 M471.2 480.300 H487.5 M463.800 456.2 V472.500 M463.800 487.500 V505" stroke="#000" stroke-width="1"/>
<circle cx="467" cy="498" r="14.8" fill="none" stroke="#fff" stroke-width="1.1"/>
<circle cx="467" cy="498" r="2.6" fill="#f5a94a" stroke="#6b3a10" stroke-width=".8"/>
<path d="M225 942.500 L210 950" stroke="#dc0000" stroke-width="1.6"/>
<path d="M225 942.500 L244.500 948" stroke="#00c800" stroke-width="1.6"/>
<path d="M225 942.500 V919" stroke="#0000dc" stroke-width="1.6"/>
<text x="211.500" y="947.500" fill="#dc0000" font-size="12.5">x</text>
<text x="247" y="946.500" fill="#00c800" font-size="12.5">y</text>
<text x="227" y="917.500" fill="#0000dc" font-size="12.5">z</text>
<text x="224.500" y="58.500" fill="#fff" font-size="12.85">User Persp</text>
<text x="274.500" y="955.500" fill="#fff" font-size="12.85">(25) Fzg. Rahmen</text>
</svg>
</div>
<div class="a" style="left:0;top:0;width:1920px;height:32px;background:#727272;border-top:1px solid #7d7d7d"></div>
<div class="a" style="left:0;top:32px;width:1920px;height:1px;background:#0c0c0c"></div>
<div class="w menu" style="left:10px;top:5px;width:40px;height:25px;border-radius:5px 5px 5px 5px;padding:5px 0px 0;justify-content:flex-start;"></div>
<svg class="a" style="left:16px;top:8.7px;" width="17.5" height="17.5" viewBox="0 0 17.5 17.5"><circle cx="8.750" cy="8.750" r="8.200" fill="#0a0a0a"/><circle cx="8.750" cy="8.750" r="7.300" fill="#a6bce2"/><circle cx="8.750" cy="8.750" r="6.500" fill="url(#gInfo)"/><rect x="7.700" y="3.300" width="2.500" height="2.500" fill="#fff"/><path d="M6.500 7.200 H10.300 V12 H11.600 V13.500 H6.300 V12 H7.700 V8.600 H6.500Z" fill="#fff"/></svg>
<svg class="ud" style="left:37.5px;top:9.3px;height:16px" viewBox="0 0 9 16"><path d="M4.5 0 L8.2 6.4 H0.8 Z M4.5 16 L8.2 9.6 H0.8 Z" fill="#c8c8c8" opacity=".92"/></svg>
<div class="lbl" style="left:65.5px;top:9.9px;color:#000;">File</div>
<div class="lbl" style="left:111.5px;top:9.9px;color:#000;">Render</div>
<div class="lbl" style="left:182.5px;top:9.9px;color:#000;">Window</div>
<div class="lbl" style="left:258.7px;top:9.9px;color:#000;">Help</div>
<div class="w menu" style="left:303px;top:5px;width:41px;height:25px;border-radius:5px 0px 0px 5px;padding:5px 0px 0;justify-content:flex-start;"></div>
<svg class="a" style="left:309px;top:8.5px;" width="17.5" height="17.5" viewBox="0 0 17.5 17.5"><rect x=".5" y=".5" width="16.500" height="16.500" rx="1.500" fill="#2a2a2a"/><rect x="1.700" y="1.700" width="6" height="5.300" fill="#dcdcdc" stroke="#fff" stroke-width=".8"/><rect x="1.700" y="8.300" width="6" height="7.500" fill="#e4e4e4" stroke="#fff" stroke-width=".8"/><rect x="9.300" y="1.700" width="6.500" height="14.100" fill="#e0e0e0" stroke="#fff" stroke-width=".8"/><path d="M3 14 H6.500 M10.500 14 H14.500" stroke="#777" stroke-width="1"/></svg>
<svg class="ud" style="left:330.5px;top:9.3px;height:16px" viewBox="0 0 9 16"><path d="M4.5 0 L8.2 6.4 H0.8 Z M4.5 16 L8.2 9.6 H0.8 Z" fill="#c8c8c8" opacity=".92"/></svg>
<div class="w txt" style="left:342px;top:5px;width:151px;height:25px;border-radius:0px 0px 0px 0px;padding:5px 9px 0;justify-content:flex-start;">Default</div>
<div class="w tool" style="left:492px;top:5px;width:26px;height:25px;border-radius:0px 0px 0px 0px;padding:5px 0px 0;justify-content:flex-start;"></div>
<svg class="a" style="left:496.5px;top:8.5px;" width="17" height="17" viewBox="0 0 16 16"><path d="M8 2.5 V13.5 M2.5 8 H13.5" stroke="#222" stroke-width="3.6" stroke-linecap="round"/><path d="M8 2.8 V13.2 M2.8 8 H13.2" stroke="#fff" stroke-width="1.9" stroke-linecap="round"/></svg>
<div class="w tool" style="left:517px;top:5px;width:26px;height:25px;border-radius:0px 5px 5px 0px;padding:5px 0px 0;justify-content:flex-start;"></div>
<svg class="a" style="left:521.5px;top:8.5px;" width="17" height="17" viewBox="0 0 16 16"><path d="M3 3 L13 13 M13 3 L3 13" stroke="#222" stroke-width="3.6" stroke-linecap="round"/><path d="M3.2 3.2 L12.8 12.8 M12.8 3.2 L3.2 12.8" stroke="#fff" stroke-width="1.8" stroke-linecap="round"/></svg>
<div class="w menu" style="left:549px;top:5px;width:41px;height:25px;border-radius:5px 0px 0px 5px;padding:5px 0px 0;justify-content:flex-start;"></div>
<svg class="a" style="left:553.5px;top:7px;" width="19" height="19" viewBox="0 0 16 16"><circle cx="3" cy="3" r="2.6" fill="#e9e56a" opacity=".55"/><rect x="2" y="2" width="2.2" height="2.2" fill="#f4f08a"/><path d="M8.5 3.5 V11 A3 1.4 0 0 0 14.5 11 V3.5Z" fill="url(#gCyl)" stroke="#1b3775" stroke-width=".7"/><ellipse cx="11.5" cy="3.5" rx="3" ry="1.4" fill="#bcd4fb" stroke="#1b3775" stroke-width=".6"/><circle cx="6" cy="11" r="3.9" fill="url(#gSph)" stroke="#222" stroke-width=".9"/></svg>
<svg class="ud" style="left:576.5px;top:9.3px;height:16px" viewBox="0 0 9 16"><path d="M4.5 0 L8.2 6.4 H0.8 Z M4.5 16 L8.2 9.6 H0.8 Z" fill="#c8c8c8" opacity=".92"/></svg>
<div class="w txt" style="left:588px;top:5px;width:151px;height:25px;border-radius:0px 0px 0px 0px;padding:5px 9px 0;justify-content:flex-start;">Scene</div>
<div class="w tool" style="left:738px;top:5px;width:26px;height:25px;border-radius:0px 0px 0px 0px;padding:5px 0px 0;justify-content:flex-start;"></div>
<svg class="a" style="left:742.5px;top:8.5px;" width="17" height="17" viewBox="0 0 16 16"><path d="M8 2.5 V13.5 M2.5 8 H13.5" stroke="#222" stroke-width="3.6" stroke-linecap="round"/><path d="M8 2.8 V13.2 M2.8 8 H13.2" stroke="#fff" stroke-width="1.9" stroke-linecap="round"/></svg>
<div class="w tool" style="left:763px;top:5px;width:26px;height:25px;border-radius:0px 5px 5px 0px;padding:5px 0px 0;justify-content:flex-start;"></div>
<svg class="a" style="left:767.5px;top:8.5px;" width="17" height="17" viewBox="0 0 16 16"><path d="M3 3 L13 13 M13 3 L3 13" stroke="#222" stroke-width="3.6" stroke-linecap="round"/><path d="M3.2 3.2 L12.8 12.8 M12.8 3.2 L3.2 12.8" stroke="#fff" stroke-width="1.8" stroke-linecap="round"/></svg>
<div class="w menu" style="left:808px;top:5px;width:142px;height:25px;border-radius:5px 5px 5px 5px;padding:5px 9.5px 0;justify-content:flex-start;">Blender Render</div>
<svg class="ud" style="left:937.5px;top:9.3px;height:16px" viewBox="0 0 9 16"><path d="M4.5 0 L8.2 6.4 H0.8 Z M4.5 16 L8.2 9.6 H0.8 Z" fill="#c8c8c8" opacity=".92"/></svg>
<svg class="a" style="left:971.5px;top:8.8px;" width="20" height="18" viewBox="0 0 20 18"><g stroke="#2e1a00" stroke-width="1.6" stroke-linejoin="round" fill="#2e1a00"><path d="M2.500 3.600 H12 V6.200 H3.200Z"/><path d="M8.200 1.600 L9.700 0.300 L17 5 L15 7.200Z"/><path d="M0.300 11 L6.500 5.500 L8.500 7.500 L1.600 12.800Z"/><circle cx="12.400" cy="10.300" r="6.700"/></g><g fill="url(#gBl)"><path d="M2.500 3.600 H12 V6.200 H3.200Z"/><path d="M8.200 1.600 L9.700 0.300 L17 5 L15 7.200Z"/><path d="M0.300 11 L6.500 5.500 L8.500 7.500 L1.600 12.800Z"/><circle cx="12.400" cy="10.300" r="6.700"/></g><circle cx="12.300" cy="10.200" r="4.100" fill="#fff"/><circle cx="12.300" cy="10.300" r="2.400" fill="#2357a8"/></svg>
<div class="lbl" style="left:1004.5px;top:9.9px;color:#000;"><span style="font-size:12.75px">v2.79 | Verts:2,434 | Faces:1,512 | Tris:3,800 | Objects:1/8 | Lamps:0/0 | Mem:21.97M | Fzg. Rahmen</span></div>
<div class="a" style="left:0;top:33px;width:200px;height:936px;background:#727272"></div>
<div class="a" style="left:0;top:33px;width:24px;height:665px;background:#4f4f4f"></div>
<div class="a" style="left:0;top:33px;width:1px;height:936px;background:#7e7e7e"></div>
<div class="tab on" style="top:40px;height:47px"><span>Tools</span></div>
<div class="tab" style="top:92px;height:56px"><span>Create</span></div>
<div class="tab" style="top:154px;height:72px"><span>Relations</span></div>
<div class="tab" style="top:233px;height:77px"><span>Animation</span></div>
<div class="tab" style="top:316px;height:60.5px"><span>Physics</span></div>
<div class="tab" style="top:383.5px;height:99.5px"><span>Grease Pencil</span></div>
<svg class="a" style="left:40px;top:42.5px" width="10" height="10" viewBox="0 0 10 10"><path d="M0 0.5 H10 L5 10 Z" fill="#1a1a1a"/></svg>
<div class="ph" style="left:55px;top:37.5px">Transform</div>
<svg class="a" style="left:174px;top:43.5px" width="15" height="8" viewBox="0 0 15 8"><rect x="0" y="0" width="2" height="2" fill="#c4c4c4"/><rect x="0" y="0" width="2" height="1" fill="#4a4a4a" opacity=".55"/><rect x="4" y="0" width="2" height="2" fill="#c4c4c4"/><rect x="4" y="0" width="2" height="1" fill="#4a4a4a" opacity=".55"/><rect x="8" y="0" width="2" height="2" fill="#c4c4c4"/><rect x="8" y="0" width="2" height="1" fill="#4a4a4a" opacity=".55"/><rect x="12" y="0" width="2" height="2" fill="#c4c4c4"/><rect x="12" y="0" width="2" height="1" fill="#4a4a4a" opacity=".55"/><rect x="0" y="3" width="2" height="2" fill="#c4c4c4"/><rect x="0" y="3" width="2" height="1" fill="#4a4a4a" opacity=".55"/><rect x="4" y="3" width="2" height="2" fill="#c4c4c4"/><rect x="4" y="3" width="2" height="1" fill="#4a4a4a" opacity=".55"/><rect x="8" y="3" width="2" height="2" fill="#c4c4c4"/><rect x="8" y="3" width="2" height="1" fill="#4a4a4a" opacity=".55"/><rect x="12" y="3" width="2" height="2" fill="#c4c4c4"/><rect x="12" y="3" width="2" height="1" fill="#4a4a4a" opacity=".55"/><rect x="0" y="6" width="2" height="2" fill="#c4c4c4"/><rect x="0" y="6" width="2" height="1" fill="#4a4a4a" opacity=".55"/><rect x="4" y="6" width="2" height="2" fill="#c4c4c4"/><rect x="4" y="6" width="2" height="1" fill="#4a4a4a" opacity=".55"/><rect x="8" y="6" width="2" height="2" fill="#c4c4c4"/><rect x="8" y="6" width="2" height="1" fill="#4a4a4a" opacity=".55"/><rect x="12" y="6" width="2" height="2" fill="#c4c4c4"/><rect x="12" y="6" width="2" height="1" fill="#4a4a4a" opacity=".55"/></svg>
<div class="w tool" style="left:35px;top:72px;width:154px;height:25px;border-radius:5px 5px 0px 0px;padding:5px 9px 0;justify-content:flex-start;">Translate</div>
<div class="w tool" style="left:35px;top:96px;width:154px;height:26px;border-radius:0px 0px 0px 0px;padding:5px 9px 0;justify-content:flex-start;">Rotate</div>
<div class="w tool" style="left:35px;top:121px;width:154px;height:25px;border-radius:0px 0px 5px 5px;padding:5px 9px 0;justify-content:flex-start;">Scale</div>
<div class="w tool" style="left:35px;top:153px;width:154px;height:25px;border-radius:5px 5px 5px 5px;padding:5px 9px 0;justify-content:flex-start;">Mirror</div>
<div class="sep" style="left:30px;top:188px;width:164px"></div>
<svg class="a" style="left:40px;top:197.5px" width="10" height="10" viewBox="0 0 10 10"><path d="M0 0.5 H10 L5 10 Z" fill="#1a1a1a"/></svg>
<div class="ph" style="left:55px;top:192.5px">Edit</div>
<svg class="a" style="left:174px;top:198.5px" width="15" height="8" viewBox="0 0 15 8"><rect x="0" y="0" width="2" height="2" fill="#c4c4c4"/><rect x="0" y="0" width="2" height="1" fill="#4a4a4a" opacity=".55"/><rect x="4" y="0" width="2" height="2" fill="#c4c4c4"/><rect x="4" y="0" width="2" height="1" fill="#4a4a4a" opacity=".55"/><rect x="8" y="0" width="2" height="2" fill="#c4c4c4"/><rect x="8" y="0" width="2" height="1" fill="#4a4a4a" opacity=".55"/><rect x="12" y="0" width="2" height="2" fill="#c4c4c4"/><rect x="12" y="0" width="2" height="1" fill="#4a4a4a" opacity=".55"/><rect x="0" y="3" width="2" height="2" fill="#c4c4c4"/><rect x="0" y="3" width="2" height="1" fill="#4a4a4a" opacity=".55"/><rect x="4" y="3" width="2" height="2" fill="#c4c4c4"/><rect x="4" y="3" width="2" height="1" fill="#4a4a4a" opacity=".55"/><rect x="8" y="3" width="2" height="2" fill="#c4c4c4"/><rect x="8" y="3" width="2" height="1" fill="#4a4a4a" opacity=".55"/><rect x="12" y="3" width="2" height="2" fill="#c4c4c4"/><rect x="12" y="3" width="2" height="1" fill="#4a4a4a" opacity=".55"/><rect x="0" y="6" width="2" height="2" fill="#c4c4c4"/><rect x="0" y="6" width="2" height="1" fill="#4a4a4a" opacity=".55"/><rect x="4" y="6" width="2" height="2" fill="#c4c4c4"/><rect x="4" y="6" width="2" height="1" fill="#4a4a4a" opacity=".55"/><rect x="8" y="6" width="2" height="2" fill="#c4c4c4"/><rect x="8" y="6" width="2" height="1" fill="#4a4a4a" opacity=".55"/><rect x="12" y="6" width="2" height="2" fill="#c4c4c4"/><rect x="12" y="6" width="2" height="1" fill="#4a4a4a" opacity=".55"/></svg>
<div class="w tool" style="left:35px;top:227px;width:154px;height:25px;border-radius:5px 5px 0px 0px;padding:5px 9px 0;justify-content:flex-start;">Duplicate</div>
<div class="w tool" style="left:35px;top:251px;width:154px;height:26px;border-radius:0px 0px 0px 0px;padding:5px 9px 0;justify-content:flex-start;">Duplicate Linked</div>
<div class="w tool" style="left:35px;top:276px;width:154px;height:25px;border-radius:0px 0px 5px 5px;padding:5px 9px 0;justify-content:flex-start;">Delete</div>
<div class="w tool" style="left:35px;top:308px;width:154px;height:25px;border-radius:5px 5px 5px 5px;padding:5px 9px 0;justify-content:flex-start;">Join</div>
<div class="w menu" style="left:35px;top:339px;width:154px;height:25px;border-radius:5px 5px 5px 5px;padding:5px 9px 0;justify-content:flex-start;">Set Origin</div>
<svg class="ud" style="left:176.5px;top:343.8px;height:16px" viewBox="0 0 9 16"><path d="M4.5 0 L8.2 6.4 H0.8 Z M4.5 16 L8.2 9.6 H0.8 Z" fill="#c8c8c8" opacity=".92"/></svg>
<div class="lbl" style="left:45px;top:374.2px;color:#000;">Shading:</div>
<div class="w tool" style="left:35px;top:395px;width:78px;height:25px;border-radius:5px 0px 0px 5px;padding:5px 9px 0;justify-content:flex-start;">Smooth</div>
<div class="w tool" style="left:111px;top:395px;width:78px;height:25px;border-radius:0px 5px 5px 0px;padding:5px 9px 0;justify-content:flex-start;">Flat</div>
<div class="lbl" style="left:45px;top:430.2px;color:#000;">Data Transfer:</div>
<div class="w tool" style="left:35px;top:451px;width:78px;height:25px;border-radius:5px 0px 0px 5px;padding:5px 9px 0;justify-content:flex-start;">Data</div>
<div class="w tool" style="left:111px;top:451px;width:78px;height:25px;border-radius:0px 5px 5px 0px;padding:5px 9px 0;justify-content:flex-start;">Data Lay</div>
<div class="sep" style="left:30px;top:485.5px;width:164px"></div>
<svg class="a" style="left:40px;top:495.5px" width="10" height="10" viewBox="0 0 10 10"><path d="M0.5 0 V10 L10 5 Z" fill="#1a1a1a"/></svg>
<div class="ph" style="left:55px;top:490.5px">History</div>
<svg class="a" style="left:174px;top:496.5px" width="15" height="8" viewBox="0 0 15 8"><rect x="0" y="0" width="2" height="2" fill="#c4c4c4"/><rect x="0" y="0" width="2" height="1" fill="#4a4a4a" opacity=".55"/><rect x="4" y="0" width="2" height="2" fill="#c4c4c4"/><rect x="4" y="0" width="2" height="1" fill="#4a4a4a" opacity=".55"/><rect x="8" y="0" width="2" height="2" fill="#c4c4c4"/><rect x="8" y="0" width="2" height="1" fill="#4a4a4a" opacity=".55"/><rect x="12" y="0" width="2" height="2" fill="#c4c4c4"/><rect x="12" y="0" width="2" height="1" fill="#4a4a4a" opacity=".55"/><rect x="0" y="3" width="2" height="2" fill="#c4c4c4"/><rect x="0" y="3" width="2" height="1" fill="#4a4a4a" opacity=".55"/><rect x="4" y="3" width="2" height="2" fill="#c4c4c4"/><rect x="4" y="3" width="2" height="1" fill="#4a4a4a" opacity=".55"/><rect x="8" y="3" width="2" height="2" fill="#c4c4c4"/><rect x="8" y="3" width="2" height="1" fill="#4a4a4a" opacity=".55"/><rect x="12" y="3" width="2" height="2" fill="#c4c4c4"/><rect x="12" y="3" width="2" height="1" fill="#4a4a4a" opacity=".55"/><rect x="0" y="6" width="2" height="2" fill="#c4c4c4"/><rect x="0" y="6" width="2" height="1" fill="#4a4a4a" opacity=".55"/><rect x="4" y="6" width="2" height="2" fill="#c4c4c4"/><rect x="4" y="6" width="2" height="1" fill="#4a4a4a" opacity=".55"/><rect x="8" y="6" width="2" height="2" fill="#c4c4c4"/><rect x="8" y="6" width="2" height="1" fill="#4a4a4a" opacity=".55"/><rect x="12" y="6" width="2" height="2" fill="#c4c4c4"/><rect x="12" y="6" width="2" height="1" fill="#4a4a4a" opacity=".55"/></svg>
<div class="a" style="left:0;top:698px;width:200px;height:271px;background:#727272;border-top:1px solid #8a8a8a;border-left:1px solid #7e7e7e"></div>
<svg class="a" style="left:15px;top:709.5px" width="10" height="10" viewBox="0 0 10 10"><path d="M0 0.5 H10 L5 10 Z" fill="#1a1a1a"/></svg>
<div class="ph" style="left:30px;top:704.5px"><span style="letter-spacing:-0.12px">Apply Modifier</span></div>
<svg class="a" style="left:174px;top:710.5px" width="15" height="8" viewBox="0 0 15 8"><rect x="0" y="0" width="2" height="2" fill="#c4c4c4"/><rect x="0" y="0" width="2" height="1" fill="#4a4a4a" opacity=".55"/><rect x="4" y="0" width="2" height="2" fill="#c4c4c4"/><rect x="4" y="0" width="2" height="1" fill="#4a4a4a" opacity=".55"/><rect x="8" y="0" width="2" height="2" fill="#c4c4c4"/><rect x="8" y="0" width="2" height="1" fill="#4a4a4a" opacity=".55"/><rect x="12" y="0" width="2" height="2" fill="#c4c4c4"/><rect x="12" y="0" width="2" height="1" fill="#4a4a4a" opacity=".55"/><rect x="0" y="3" width="2" height="2" fill="#c4c4c4"/><rect x="0" y="3" width="2" height="1" fill="#4a4a4a" opacity=".55"/><rect x="4" y="3" width="2" height="2" fill="#c4c4c4"/><rect x="4" y="3" width="2" height="1" fill="#4a4a4a" opacity=".55"/><rect x="8" y="3" width="2" height="2" fill="#c4c4c4"/><rect x="8" y="3" width="2" height="1" fill="#4a4a4a" opacity=".55"/><rect x="12" y="3" width="2" height="2" fill="#c4c4c4"/><rect x="12" y="3" width="2" height="1" fill="#4a4a4a" opacity=".55"/><rect x="0" y="6" width="2" height="2" fill="#c4c4c4"/><rect x="0" y="6" width="2" height="1" fill="#4a4a4a" opacity=".55"/><rect x="4" y="6" width="2" height="2" fill="#c4c4c4"/><rect x="4" y="6" width="2" height="1" fill="#4a4a4a" opacity=".55"/><rect x="8" y="6" width="2" height="2" fill="#c4c4c4"/><rect x="8" y="6" width="2" height="1" fill="#4a4a4a" opacity=".55"/><rect x="12" y="6" width="2" height="2" fill="#c4c4c4"/><rect x="12" y="6" width="2" height="1" fill="#4a4a4a" opacity=".55"/></svg>
<div class="lbl" style="left:20px;top:742.2px;color:#000;">Apply as</div>
<div class="w menu" style="left:10px;top:763px;width:179px;height:25px;border-radius:5px 5px 5px 5px;padding:5px 9px 0;justify-content:flex-start;">Object Data</div>
<svg class="ud" style="left:176.5px;top:767.8px;height:16px" viewBox="0 0 9 16"><path d="M4.5 0 L8.2 6.4 H0.8 Z M4.5 16 L8.2 9.6 H0.8 Z" fill="#c8c8c8" opacity=".92"/></svg>
<div class="lbl" style="left:20px;top:798.2px;color:#000;">Modifier</div>
<div class="w txt" style="left:10px;top:819px;width:179px;height:25px;border-radius:5px 5px 5px 5px;padding:5px 9px 0;justify-content:flex-start;">Mirror</div>
<div class="a" style="left:1403px;top:33px;width:225px;height:936px;background:#727272;border-left:1px solid #636363"></div>
<svg class="a" style="left:1418px;top:42.5px" width="10" height="10" viewBox="0 0 10 10"><path d="M0 0.5 H10 L5 10 Z" fill="#1a1a1a"/></svg>
<div class="ph" style="left:1433px;top:37.5px">Transform</div>
<svg class="a" style="left:1581px;top:43.5px" width="15" height="8" viewBox="0 0 15 8"><rect x="0" y="0" width="2" height="2" fill="#c4c4c4"/><rect x="0" y="0" width="2" height="1" fill="#4a4a4a" opacity=".55"/><rect x="4" y="0" width="2" height="2" fill="#c4c4c4"/><rect x="4" y="0" width="2" height="1" fill="#4a4a4a" opacity=".55"/><rect x="8" y="0" width="2" height="2" fill="#c4c4c4"/><rect x="8" y="0" width="2" height="1" fill="#4a4a4a" opacity=".55"/><rect x="12" y="0" width="2" height="2" fill="#c4c4c4"/><rect x="12" y="0" width="2" height="1" fill="#4a4a4a" opacity=".55"/><rect x="0" y="3" width="2" height="2" fill="#c4c4c4"/><rect x="0" y="3" width="2" height="1" fill="#4a4a4a" opacity=".55"/><rect x="4" y="3" width="2" height="2" fill="#c4c4c4"/><rect x="4" y="3" width="2" height="1" fill="#4a4a4a" opacity=".55"/><rect x="8" y="3" width="2" height="2" fill="#c4c4c4"/><rect x="8" y="3" width="2" height="1" fill="#4a4a4a" opacity=".55"/><rect x="12" y="3" width="2" height="2" fill="#c4c4c4"/><rect x="12" y="3" width="2" height="1" fill="#4a4a4a" opacity=".55"/><rect x="0" y="6" width="2" height="2" fill="#c4c4c4"/><rect x="0" y="6" width="2" height="1" fill="#4a4a4a" opacity=".55"/><rect x="4" y="6" width="2" height="2" fill="#c4c4c4"/><rect x="4" y="6" width="2" height="1" fill="#4a4a4a" opacity=".55"/><rect x="8" y="6" width="2" height="2" fill="#c4c4c4"/><rect x="8" y="6" width="2" height="1" fill="#4a4a4a" opacity=".55"/><rect x="12" y="6" width="2" height="2" fill="#c4c4c4"/><rect x="12" y="6" width="2" height="1" fill="#4a4a4a" opacity=".55"/></svg>
<div class="lbl" style="left:1423.5px;top:76.2px;color:#000;">Location:</div>
<div class="w num" style="left:1413px;top:97px;width:138px;height:26px;border-radius:12px 12px 0px 0px;padding:5px 0px 0;justify-content:flex-start;padding-top:3px;"><span style="position:absolute;left:20px">X:</span><span style="position:absolute;right:20.5px">-0.000000</span><svg style="position:absolute;left:7px;top:50%;margin-top:-4.5px" width="6" height="8" viewBox="0 0 6 8"><path d="M6 0 V8 L0 4Z" fill="#5c5c5c"/></svg><svg style="position:absolute;right:7px;top:50%;margin-top:-4.5px" width="6" height="8" viewBox="0 0 6 8"><path d="M0 0 V8 L6 4Z" fill="#5c5c5c"/></svg></div>
<div class="w tog" style="left:1561px;top:97px;width:35px;height:26px;border-radius:5px 5px 0px 0px;padding:5px 0px 0;justify-content:flex-start;"></div>
<svg class="a" style="left:1568px;top:100px;" width="20" height="18" viewBox="0 0 20 18"><path d="M2.5 7.6 V5.5 A3.7 3.7 0 0 1 9.9 5.5 V8" stroke="#222" stroke-width="3" fill="none"/><path d="M2.5 7.4 V5.5 A3.7 3.7 0 0 1 9.9 5.5 V8" stroke="#f4f4f4" stroke-width="1.3" fill="none"/><rect x="6.5" y="8.500" width="12" height="8.500" fill="#efefef" stroke="#222" stroke-width="1"/><path d="M7.500 11.500 H17.500 M7.500 14.300 H17.500" stroke="#b8b8b8" stroke-width="1.1"/><rect x="11.700" y="11" width="1.800" height="2.800" fill="#222"/></svg>
<div class="w num" style="left:1413px;top:121px;width:138px;height:27px;border-radius:0px 0px 0px 0px;padding:5px 0px 0;justify-content:flex-start;padding-top:3px;"><span style="position:absolute;left:20px">Y:</span><span style="position:absolute;right:20.5px">0.00000</span><svg style="position:absolute;left:7px;top:50%;margin-top:-4.5px" width="6" height="8" viewBox="0 0 6 8"><path d="M6 0 V8 L0 4Z" fill="#5c5c5c"/></svg><svg style="position:absolute;right:7px;top:50%;margin-top:-4.5px" width="6" height="8" viewBox="0 0 6 8"><path d="M0 0 V8 L6 4Z" fill="#5c5c5c"/></svg></div>
<div class="w tog" style="left:1561px;top:121px;width:35px;height:27px;border-radius:0px 0px 0px 0px;padding:5px 0px 0;justify-content:flex-start;"></div>
<svg class="a" style="left:1568px;top:124.4px;" width="20" height="18" viewBox="0 0 20 18"><path d="M2.5 7.6 V5.5 A3.7 3.7 0 0 1 9.9 5.5 V8" stroke="#222" stroke-width="3" fill="none"/><path d="M2.5 7.4 V5.5 A3.7 3.7 0 0 1 9.9 5.5 V8" stroke="#f4f4f4" stroke-width="1.3" fill="none"/><rect x="6.5" y="8.500" width="12" height="8.500" fill="#efefef" stroke="#222" stroke-width="1"/><path d="M7.500 11.500 H17.500 M7.500 14.300 H17.500" stroke="#b8b8b8" stroke-width="1.1"/><rect x="11.700" y="11" width="1.800" height="2.800" fill="#222"/></svg>
<div class="w num" style="left:1413px;top:146px;width:138px;height:26px;border-radius:0px 0px 12px 12px;padding:5px 0px 0;justify-content:flex-start;padding-top:3px;"><span style="position:absolute;left:20px">Z:</span><span style="position:absolute;right:20.5px">0.00000</span><svg style="position:absolute;left:7px;top:50%;margin-top:-4.5px" width="6" height="8" viewBox="0 0 6 8"><path d="M6 0 V8 L0 4Z" fill="#5c5c5c"/></svg><svg style="position:absolute;right:7px;top:50%;margin-top:-4.5px" width="6" height="8" viewBox="0 0 6 8"><path d="M0 0 V8 L6 4Z" fill="#5c5c5c"/></svg></div>
<div class="w tog" style="left:1561px;top:146px;width:35px;height:26px;border-radius:0px 0px 5px 5px;padding:5px 0px 0;justify-content:flex-start;"></div>
<svg class="a" style="left:1568px;top:149px;" width="20" height="18" viewBox="0 0 20 18"><path d="M2.5 7.6 V5.5 A3.7 3.7 0 0 1 9.9 5.5 V8" stroke="#222" stroke-width="3" fill="none"/><path d="M2.5 7.4 V5.5 A3.7 3.7 0 0 1 9.9 5.5 V8" stroke="#f4f4f4" stroke-width="1.3" fill="none"/><rect x="6.5" y="8.500" width="12" height="8.500" fill="#efefef" stroke="#222" stroke-width="1"/><path d="M7.500 11.500 H17.500 M7.500 14.300 H17.500" stroke="#b8b8b8" stroke-width="1.1"/><rect x="11.700" y="11" width="1.800" height="2.800" fill="#222"/></svg>
<div class="lbl" style="left:1423.5px;top:178.2px;color:#000;">Rotation:</div>
<div class="w num" style="left:1413px;top:199px;width:138px;height:26px;border-radius:12px 12px 0px 0px;padding:5px 0px 0;justify-content:flex-start;padding-top:3px;"><span style="position:absolute;left:20px">X:</span><span style="position:absolute;right:20.5px">0°</span><svg style="position:absolute;left:7px;top:50%;margin-top:-4.5px" width="6" height="8" viewBox="0 0 6 8"><path d="M6 0 V8 L0 4Z" fill="#5c5c5c"/></svg><svg style="position:absolute;right:7px;top:50%;margin-top:-4.5px" width="6" height="8" viewBox="0 0 6 8"><path d="M0 0 V8 L6 4Z" fill="#5c5c5c"/></svg></div>
<div class="w tog" style="left:1561px;top:199px;width:35px;height:26px;border-radius:5px 5px 0px 0px;padding:5px 0px 0;justify-content:flex-start;"></div>
<svg class="a" style="left:1568px;top:202px;" width="20" height="18" viewBox="0 0 20 18"><path d="M2.5 7.6 V5.5 A3.7 3.7 0 0 1 9.9 5.5 V8" stroke="#222" stroke-width="3" fill="none"/><path d="M2.5 7.4 V5.5 A3.7 3.7 0 0 1 9.9 5.5 V8" stroke="#f4f4f4" stroke-width="1.3" fill="none"/><rect x="6.5" y="8.500" width="12" height="8.500" fill="#efefef" stroke="#222" stroke-width="1"/><path d="M7.500 11.500 H17.500 M7.500 14.300 H17.500" stroke="#b8b8b8" stroke-width="1.1"/><rect x="11.700" y="11" width="1.800" height="2.800" fill="#222"/></svg>
<div class="w num" style="left:1413px;top:223px;width:138px;height:27px;border-radius:0px 0px 0px 0px;padding:5px 0px 0;justify-content:flex-start;padding-top:3px;"><span style="position:absolute;left:20px">Y:</span><span style="position:absolute;right:20.5px">0°</span><svg style="position:absolute;left:7px;top:50%;margin-top:-4.5px" width="6" height="8" viewBox="0 0 6 8"><path d="M6 0 V8 L0 4Z" fill="#5c5c5c"/></svg><svg style="position:absolute;right:7px;top:50%;margin-top:-4.5px" width="6" height="8" viewBox="0 0 6 8"><path d="M0 0 V8 L6 4Z" fill="#5c5c5c"/></svg></div>
<div class="w tog" style="left:1561px;top:223px;width:35px;height:27px;border-radius:0px 0px 0px 0px;padding:5px 0px 0;justify-content:flex-start;"></div>
<svg class="a" style="left:1568px;top:226.4px;" width="20" height="18" viewBox="0 0 20 18"><path d="M2.5 7.6 V5.5 A3.7 3.7 0 0 1 9.9 5.5 V8" stroke="#222" stroke-width="3" fill="none"/><path d="M2.5 7.4 V5.5 A3.7 3.7 0 0 1 9.9 5.5 V8" stroke="#f4f4f4" stroke-width="1.3" fill="none"/><rect x="6.5" y="8.500" width="12" height="8.500" fill="#efefef" stroke="#222" stroke-width="1"/><path d="M7.500 11.500 H17.500 M7.500 14.300 H17.500" stroke="#b8b8b8" stroke-width="1.1"/><rect x="11.700" y="11" width="1.800" height="2.800" fill="#222"/></svg>
<div class="w num" style="left:1413px;top:248px;width:138px;height:26px;border-radius:0px 0px 12px 12px;padding:5px 0px 0;justify-content:flex-start;padding-top:3px;"><span style="position:absolute;left:20px">Z:</span><span style="position:absolute;right:20.5px">0°</span><svg style="position:absolute;left:7px;top:50%;margin-top:-4.5px" width="6" height="8" viewBox="0 0 6 8"><path d="M6 0 V8 L0 4Z" fill="#5c5c5c"/></svg><svg style="position:absolute;right:7px;top:50%;margin-top:-4.5px" width="6" height="8" viewBox="0 0 6 8"><path d="M0 0 V8 L6 4Z" fill="#5c5c5c"/></svg></div>
<div class="w tog" style="left:1561px;top:248px;width:35px;height:26px;border-radius:0px 0px 5px 5px;padding:5px 0px 0;justify-content:flex-start;"></div>
<svg class="a" style="left:1568px;top:251px;" width="20" height="18" viewBox="0 0 20 18"><path d="M2.5 7.6 V5.5 A3.7 3.7 0 0 1 9.9 5.5 V8" stroke="#222" stroke-width="3" fill="none"/><path d="M2.5 7.4 V5.5 A3.7 3.7 0 0 1 9.9 5.5 V8" stroke="#f4f4f4" stroke-width="1.3" fill="none"/><rect x="6.5" y="8.500" width="12" height="8.500" fill="#efefef" stroke="#222" stroke-width="1"/><path d="M7.500 11.500 H17.500 M7.500 14.300 H17.500" stroke="#b8b8b8" stroke-width="1.1"/><rect x="11.700" y="11" width="1.800" height="2.800" fill="#222"/></svg>
<div class="w menu" style="left:1413px;top:276px;width:183px;height:25px;border-radius:5px 5px 5px 5px;padding:5px 10px 0;justify-content:flex-start;">XYZ Euler</div>
<svg class="ud" style="left:1583.5px;top:280.8px;height:16px" viewBox="0 0 9 16"><path d="M4.5 0 L8.2 6.4 H0.8 Z M4.5 16 L8.2 9.6 H0.8 Z" fill="#c8c8c8" opacity=".92"/></svg>
<div class="lbl" style="left:1423.5px;top:307.7px;color:#000;">Scale:</div>
<div class="w num" style="left:1413px;top:328px;width:138px;height:26px;border-radius:12px 12px 0px 0px;padding:5px 0px 0;justify-content:flex-start;padding-top:3px;"><span style="position:absolute;left:20px">X:</span><span style="position:absolute;right:20.5px">1.000</span><svg style="position:absolute;left:7px;top:50%;margin-top:-4.5px" width="6" height="8" viewBox="0 0 6 8"><path d="M6 0 V8 L0 4Z" fill="#5c5c5c"/></svg><svg style="position:absolute;right:7px;top:50%;margin-top:-4.5px" width="6" height="8" viewBox="0 0 6 8"><path d="M0 0 V8 L6 4Z" fill="#5c5c5c"/></svg></div>
<div class="w tog" style="left:1561px;top:328px;width:35px;height:26px;border-radius:5px 5px 0px 0px;padding:5px 0px 0;justify-content:flex-start;"></div>
<svg class="a" style="left:1568px;top:331px;" width="20" height="18" viewBox="0 0 20 18"><path d="M2.5 7.6 V5.5 A3.7 3.7 0 0 1 9.9 5.5 V8" stroke="#222" stroke-width="3" fill="none"/><path d="M2.5 7.4 V5.5 A3.7 3.7 0 0 1 9.9 5.5 V8" stroke="#f4f4f4" stroke-width="1.3" fill="none"/><rect x="6.5" y="8.500" width="12" height="8.500" fill="#efefef" stroke="#222" stroke-width="1"/><path d="M7.500 11.500 H17.500 M7.500 14.300 H17.500" stroke="#b8b8b8" stroke-width="1.1"/><rect x="11.700" y="11" width="1.800" height="2.800" fill="#222"/></svg>
<div class="w num" style="left:1413px;top:352px;width:138px;height:27px;border-radius:0px 0px 0px 0px;padding:5px 0px 0;justify-content:flex-start;padding-top:3px;"><span style="position:absolute;left:20px">Y:</span><span style="position:absolute;right:20.5px">1.000</span><svg style="position:absolute;left:7px;top:50%;margin-top:-4.5px" width="6" height="8" viewBox="0 0 6 8"><path d="M6 0 V8 L0 4Z" fill="#5c5c5c"/></svg><svg style="position:absolute;right:7px;top:50%;margin-top:-4.5px" width="6" height="8" viewBox="0 0 6 8"><path d="M0 0 V8 L6 4Z" fill="#5c5c5c"/></svg></div>
<div class="w tog" style="left:1561px;top:352px;width:35px;height:27px;border-radius:0px 0px 0px 0px;padding:5px 0px 0;justify-content:flex-start;"></div>
<svg class="a" style="left:1568px;top:355.4px;" width="20" height="18" viewBox="0 0 20 18"><path d="M2.5 7.6 V5.5 A3.7 3.7 0 0 1 9.9 5.5 V8" stroke="#222" stroke-width="3" fill="none"/><path d="M2.5 7.4 V5.5 A3.7 3.7 0 0 1 9.9 5.5 V8" stroke="#f4f4f4" stroke-width="1.3" fill="none"/><rect x="6.5" y="8.500" width="12" height="8.500" fill="#efefef" stroke="#222" stroke-width="1"/><path d="M7.500 11.500 H17.500 M7.500 14.300 H17.500" stroke="#b8b8b8" stroke-width="1.1"/><rect x="11.700" y="11" width="1.800" height="2.800" fill="#222"/></svg>
<div class="w num" style="left:1413px;top:377px;width:138px;height:26px;border-radius:0px 0px 12px 12px;padding:5px 0px 0;justify-content:flex-start;padding-top:3px;"><span style="position:absolute;left:20px">Z:</span><span style="position:absolute;right:20.5px">1.000</span><svg style="position:absolute;left:7px;top:50%;margin-top:-4.5px" width="6" height="8" viewBox="0 0 6 8"><path d="M6 0 V8 L0 4Z" fill="#5c5c5c"/></svg><svg style="position:absolute;right:7px;top:50%;margin-top:-4.5px" width="6" height="8" viewBox="0 0 6 8"><path d="M0 0 V8 L6 4Z" fill="#5c5c5c"/></svg></div>
<div class="w tog" style="left:1561px;top:377px;width:35px;height:26px;border-radius:0px 0px 5px 5px;padding:5px 0px 0;justify-content:flex-start;"></div>
<svg class="a" style="left:1568px;top:380px;" width="20" height="18" viewBox="0 0 20 18"><path d="M2.5 7.6 V5.5 A3.7 3.7 0 0 1 9.9 5.5 V8" stroke="#222" stroke-width="3" fill="none"/><path d="M2.5 7.4 V5.5 A3.7 3.7 0 0 1 9.9 5.5 V8" stroke="#f4f4f4" stroke-width="1.3" fill="none"/><rect x="6.5" y="8.500" width="12" height="8.500" fill="#efefef" stroke="#222" stroke-width="1"/><path d="M7.500 11.500 H17.500 M7.500 14.300 H17.500" stroke="#b8b8b8" stroke-width="1.1"/><rect x="11.700" y="11" width="1.800" height="2.800" fill="#222"/></svg>
<div class="lbl" style="left:1423.5px;top:409.2px;color:#000;">Dimensions:</div>
<div class="w num" style="left:1413px;top:431px;width:183px;height:26px;border-radius:12px 12px 0px 0px;padding:5px 0px 0;justify-content:flex-start;padding-top:3px;"><span style="position:absolute;left:20px">X:</span><span style="position:absolute;right:20.5px">2.88000</span><svg style="position:absolute;left:7px;top:50%;margin-top:-4.5px" width="6" height="8" viewBox="0 0 6 8"><path d="M6 0 V8 L0 4Z" fill="#5c5c5c"/></svg><svg style="position:absolute;right:7px;top:50%;margin-top:-4.5px" width="6" height="8" viewBox="0 0 6 8"><path d="M0 0 V8 L6 4Z" fill="#5c5c5c"/></svg></div>
<div class="w num" style="left:1413px;top:455px;width:183px;height:26px;border-radius:0px 0px 0px 0px;padding:5px 0px 0;justify-content:flex-start;padding-top:3px;"><span style="position:absolute;left:20px">Y:</span><span style="position:absolute;right:20.5px">20.04954</span><svg style="position:absolute;left:7px;top:50%;margin-top:-4.5px" width="6" height="8" viewBox="0 0 6 8"><path d="M6 0 V8 L0 4Z" fill="#5c5c5c"/></svg><svg style="position:absolute;right:7px;top:50%;margin-top:-4.5px" width="6" height="8" viewBox="0 0 6 8"><path d="M0 0 V8 L6 4Z" fill="#5c5c5c"/></svg></div>
<div class="w num" style="left:1413px;top:480px;width:183px;height:25px;border-radius:0px 0px 12px 12px;padding:5px 0px 0;justify-content:flex-start;padding-top:3px;"><span style="position:absolute;left:20px">Z:</span><span style="position:absolute;right:20.5px">3.24270</span><svg style="position:absolute;left:7px;top:50%;margin-top:-4.5px" width="6" height="8" viewBox="0 0 6 8"><path d="M6 0 V8 L0 4Z" fill="#5c5c5c"/></svg><svg style="position:absolute;right:7px;top:50%;margin-top:-4.5px" width="6" height="8" viewBox="0 0 6 8"><path d="M0 0 V8 L6 4Z" fill="#5c5c5c"/></svg></div>
<div class="sep" style="left:1408px;top:514.5px;width:193px"></div>
<svg class="a" style="left:1418px;top:524.5px" width="10" height="10" viewBox="0 0 10 10"><path d="M0 0.5 H10 L5 10 Z" fill="#1a1a1a"/></svg>
<div class="w chk" style="left:1434px;top:521px;width:18px;height:17px;border-radius:4px 4px 4px 4px;padding:5px 0px 0;justify-content:flex-start;"></div>
<svg class="a" style="left:1435px;top:519px;" width="17" height="16" viewBox="0 0 17 16"><path d="M3 9 L7 13 L15 2.5" stroke="#222" stroke-width="3.3" fill="none" stroke-linecap="round" stroke-linejoin="round"/><path d="M3 9 L7 13 L15 2.5" stroke="#fff" stroke-width="1.7" fill="none" stroke-linecap="round" stroke-linejoin="round"/></svg>
<div class="ph" style="left:1458px;top:519px;width:143px;overflow:hidden">Grease Pencil Layers</div>
<svg class="a" style="left:1581.5px;top:525.5px" width="15" height="8" viewBox="0 0 15 8"><rect x="0" y="0" width="2" height="2" fill="#c4c4c4"/><rect x="0" y="0" width="2" height="1" fill="#4a4a4a" opacity=".55"/><rect x="4" y="0" width="2" height="2" fill="#c4c4c4"/><rect x="4" y="0" width="2" height="1" fill="#4a4a4a" opacity=".55"/><rect x="8" y="0" width="2" height="2" fill="#c4c4c4"/><rect x="8" y="0" width="2" height="1" fill="#4a4a4a" opacity=".55"/><rect x="12" y="0" width="2" height="2" fill="#c4c4c4"/><rect x="12" y="0" width="2" height="1" fill="#4a4a4a" opacity=".55"/><rect x="0" y="3" width="2" height="2" fill="#c4c4c4"/><rect x="0" y="3" width="2" height="1" fill="#4a4a4a" opacity=".55"/><rect x="4" y="3" width="2" height="2" fill="#c4c4c4"/><rect x="4" y="3" width="2" height="1" fill="#4a4a4a" opacity=".55"/><rect x="8" y="3" width="2" height="2" fill="#c4c4c4"/><rect x="8" y="3" width="2" height="1" fill="#4a4a4a" opacity=".55"/><rect x="12" y="3" width="2" height="2" fill="#c4c4c4"/><rect x="12" y="3" width="2" height="1" fill="#4a4a4a" opacity=".55"/><rect x="0" y="6" width="2" height="2" fill="#c4c4c4"/><rect x="0" y="6" width="2" height="1" fill="#4a4a4a" opacity=".55"/><rect x="4" y="6" width="2" height="2" fill="#c4c4c4"/><rect x="4" y="6" width="2" height="1" fill="#4a4a4a" opacity=".55"/><rect x="8" y="6" width="2" height="2" fill="#c4c4c4"/><rect x="8" y="6" width="2" height="1" fill="#4a4a4a" opacity=".55"/><rect x="12" y="6" width="2" height="2" fill="#c4c4c4"/><rect x="12" y="6" width="2" height="1" fill="#4a4a4a" opacity=".55"/></svg>
<div class="w sel" style="left:1413px;top:555px;width:91px;height:24px;border-radius:5px 0px 0px 5px;padding:5px 0px 0;justify-content:center;">Scene</div>
<div class="w menu" style="left:1503px;top:555px;width:93px;height:24px;border-radius:0px 5px 5px 0px;padding:5px 0px 0;justify-content:center;">Object</div>
<div class="w menu" style="left:1413px;top:585px;width:41px;height:25px;border-radius:5px 0px 0px 5px;padding:5px 0px 0;justify-content:flex-start;"></div>
<svg class="a" style="left:1416.5px;top:586.5px;" width="22" height="22" viewBox="0 0 18 18"><path d="M2 16 L3.5 11 L13 1.5 L16.5 5 L7 14.5 Z" fill="#7fb53a" stroke="#222" stroke-width="1"/><path d="M12 2.5 L13 1.5 L16.5 5 L15.5 6 Z" fill="#e03030"/><path d="M4.5 10.5 L13 2.3" stroke="#e8f5a0" stroke-width="1.3"/><path d="M2 16 L3.5 11 L7 14.5 Z" fill="#f0d9a8" stroke="#222" stroke-width=".7"/><path d="M2 16 L2.7 13.8 L4.3 15.3Z" fill="#222"/></svg>
<svg class="ud" style="left:1441px;top:591px;height:13px" viewBox="0 0 9 13"><path d="M4.5 0 L8.2 5.2 H0.8 Z M4.5 13 L8.2 7.8 H0.8 Z" fill="#c8c8c8" opacity=".92"/></svg>
<div class="w tool" style="left:1452px;top:585px;width:144px;height:25px;border-radius:0px 5px 5px 0px;padding:5px 0px 0;justify-content:center;padding-left:17px;">New</div>
<svg class="a" style="left:1459px;top:589.5px;" width="16" height="16" viewBox="0 0 16 16"><path d="M8 2.5 V13.5 M2.5 8 H13.5" stroke="#222" stroke-width="3.6" stroke-linecap="round"/><path d="M8 2.8 V13.2 M2.8 8 H13.2" stroke="#fff" stroke-width="1.9" stroke-linecap="round"/></svg>
<div class="w tool" style="left:1413px;top:616px;width:183px;height:25px;border-radius:5px 5px 5px 5px;padding:5px 0px 0;justify-content:center;">New Layer</div>
<div class="sep" style="left:1408px;top:650.5px;width:193px"></div>
<svg class="a" style="left:1418px;top:660.5px" width="10" height="10" viewBox="0 0 10 10"><path d="M0 0.5 H10 L5 10 Z" fill="#1a1a1a"/></svg>
<div class="ph" style="left:1433px;top:655.5px">View</div>
<svg class="a" style="left:1581px;top:661.5px" width="15" height="8" viewBox="0 0 15 8"><rect x="0" y="0" width="2" height="2" fill="#c4c4c4"/><rect x="0" y="0" width="2" height="1" fill="#4a4a4a" opacity=".55"/><rect x="4" y="0" width="2" height="2" fill="#c4c4c4"/><rect x="4" y="0" width="2" height="1" fill="#4a4a4a" opacity=".55"/><rect x="8" y="0" width="2" height="2" fill="#c4c4c4"/><rect x="8" y="0" width="2" height="1" fill="#4a4a4a" opacity=".55"/><rect x="12" y="0" width="2" height="2" fill="#c4c4c4"/><rect x="12" y="0" width="2" height="1" fill="#4a4a4a" opacity=".55"/><rect x="0" y="3" width="2" height="2" fill="#c4c4c4"/><rect x="0" y="3" width="2" height="1" fill="#4a4a4a" opacity=".55"/><rect x="4" y="3" width="2" height="2" fill="#c4c4c4"/><rect x="4" y="3" width="2" height="1" fill="#4a4a4a" opacity=".55"/><rect x="8" y="3" width="2" height="2" fill="#c4c4c4"/><rect x="8" y="3" width="2" height="1" fill="#4a4a4a" opacity=".55"/><rect x="12" y="3" width="2" height="2" fill="#c4c4c4"/><rect x="12" y="3" width="2" height="1" fill="#4a4a4a" opacity=".55"/><rect x="0" y="6" width="2" height="2" fill="#c4c4c4"/><rect x="0" y="6" width="2" height="1" fill="#4a4a4a" opacity=".55"/><rect x="4" y="6" width="2" height="2" fill="#c4c4c4"/><rect x="4" y="6" width="2" height="1" fill="#4a4a4a" opacity=".55"/><rect x="8" y="6" width="2" height="2" fill="#c4c4c4"/><rect x="8" y="6" width="2" height="1" fill="#4a4a4a" opacity=".55"/><rect x="12" y="6" width="2" height="2" fill="#c4c4c4"/><rect x="12" y="6" width="2" height="1" fill="#4a4a4a" opacity=".55"/></svg>
<div class="w num" style="left:1413px;top:691px;width:183px;height:24px;border-radius:12px 12px 12px 12px;padding:5px 0px 0;justify-content:flex-start;padding-top:3px;"><span style="position:absolute;left:20px">Lens:</span><span style="position:absolute;right:20.5px">35.000</span><svg style="position:absolute;left:7px;top:50%;margin-top:-4.5px" width="6" height="8" viewBox="0 0 6 8"><path d="M6 0 V8 L0 4Z" fill="#5c5c5c"/></svg><svg style="position:absolute;right:7px;top:50%;margin-top:-4.5px" width="6" height="8" viewBox="0 0 6 8"><path d="M0 0 V8 L6 4Z" fill="#5c5c5c"/></svg></div>
<div class="lbl" style="left:1423.5px;top:721.2px;color:#000;">Lock to Object:</div>
<div class="w txt" style="left:1413px;top:744px;width:183px;height:25px;border-radius:5px 5px 5px 5px;padding:5px 0px 0;justify-content:flex-start;"></div>
<svg class="a" style="left:1420.5px;top:748.5px;" width="16" height="16" viewBox="0 0 16 16"><path d="M8 1 L14.5 4 V11.5 L8 15 L1.5 11.5 V4 Z" fill="#f4a94f" stroke="#5a3208" stroke-width="1"/><path d="M8 1 L14.5 4 L8 7.2 L1.5 4 Z" fill="#ffd9a8"/><path d="M8 7.2 L14.5 4 V11.5 L8 15 Z" fill="#e28a2b"/><path d="M1.5 4 L8 7.2 L14.5 4 M8 7.2 V15" stroke="#fff" stroke-width=".9" fill="none" opacity=".85"/><path d="M8 1 L14.5 4 V11.5 L8 15 L1.5 11.5 V4 Z" fill="none" stroke="#5a3208" stroke-width="1"/></svg>
<svg class="a" style="left:1575.5px;top:747px;" width="18" height="18" viewBox="0 0 18 18"><g opacity="1"><path d="M2 16 L3 12.5 L10 5.5 L12.5 8 L5.5 15 Z" fill="#e6e6e6" stroke="#222" stroke-width="1"/><path d="M9 4.5 L13.5 9" stroke="#111" stroke-width="2.4" stroke-linecap="round"/><path d="M11 6.5 L14 3.5" stroke="#111" stroke-width="4.6" stroke-linecap="round"/></g></svg>
<div class="w chk" style="left:1417px;top:775px;width:17px;height:17px;border-radius:4px 4px 4px 4px;padding:5px 0px 0;justify-content:flex-start;"></div>
<div class="lbl" style="left:1444.5px;top:775.2px;color:#000;">Lock to Cursor</div>
<div class="w chk" style="left:1417px;top:806px;width:17px;height:17px;border-radius:4px 4px 4px 4px;padding:5px 0px 0;justify-content:flex-start;"></div>
<div class="lbl" style="left:1444.5px;top:805.9px;color:#000;">Lock Camera to View</div>
<div class="lbl" style="left:1423.5px;top:837.2px;color:#000;">Clip:</div>
<div class="w num" style="left:1413px;top:859px;width:183px;height:25px;border-radius:12px 12px 0px 0px;padding:5px 0px 0;justify-content:flex-start;padding-top:3px;"><span style="position:absolute;left:20px">Start:</span><span style="position:absolute;right:20.5px">0.100</span><svg style="position:absolute;left:7px;top:50%;margin-top:-4.5px" width="6" height="8" viewBox="0 0 6 8"><path d="M6 0 V8 L0 4Z" fill="#5c5c5c"/></svg><svg style="position:absolute;right:7px;top:50%;margin-top:-4.5px" width="6" height="8" viewBox="0 0 6 8"><path d="M0 0 V8 L6 4Z" fill="#5c5c5c"/></svg></div>
<div class="w num" style="left:1413px;top:883px;width:183px;height:25px;border-radius:0px 0px 12px 12px;padding:5px 0px 0;justify-content:flex-start;padding-top:3px;"><span style="position:absolute;left:20px">End:</span><span style="position:absolute;right:20.5px">1000.000</span><svg style="position:absolute;left:7px;top:50%;margin-top:-4.5px" width="6" height="8" viewBox="0 0 6 8"><path d="M6 0 V8 L0 4Z" fill="#5c5c5c"/></svg><svg style="position:absolute;right:7px;top:50%;margin-top:-4.5px" width="6" height="8" viewBox="0 0 6 8"><path d="M0 0 V8 L6 4Z" fill="#5c5c5c"/></svg></div>
<div class="lbl" style="left:1423.5px;top:912.7px;color:#4f4f4f;">Local Camera:</div>
<div class="w txt" style="left:1413px;top:934px;width:183px;height:25px;border-radius:5px 5px 5px 5px;padding:5px 0px 0;justify-content:flex-start;opacity:.6;"></div>
<svg class="a" opacity=".7" style="left:1420.5px;top:938px;" width="16" height="16" viewBox="0 0 16 16"><path d="M8 1 L14.5 4 V11.5 L8 15 L1.5 11.5 V4 Z" fill="#f4a94f" stroke="#5a3208" stroke-width="1"/><path d="M8 1 L14.5 4 L8 7.2 L1.5 4 Z" fill="#ffd9a8"/><path d="M8 7.2 L14.5 4 V11.5 L8 15 Z" fill="#e28a2b"/><path d="M1.5 4 L8 7.2 L14.5 4 M8 7.2 V15" stroke="#fff" stroke-width=".9" fill="none" opacity=".85"/><path d="M8 1 L14.5 4 V11.5 L8 15 L1.5 11.5 V4 Z" fill="none" stroke="#5a3208" stroke-width="1"/></svg>
<svg class="a" style="left:1575.5px;top:936.5px;" width="18" height="18" viewBox="0 0 18 18"><g opacity="0.55"><path d="M2 16 L3 12.5 L10 5.5 L12.5 8 L5.5 15 Z" fill="#e6e6e6" stroke="#222" stroke-width="1"/><path d="M9 4.5 L13.5 9" stroke="#111" stroke-width="2.4" stroke-linecap="round"/><path d="M11 6.5 L14 3.5" stroke="#111" stroke-width="4.6" stroke-linecap="round"/></g></svg>
<div class="w chk" style="left:1417px;top:968px;width:18px;height:18px;border-radius:4px 4px 4px 4px;padding:5px 0px 0;justify-content:flex-start;opacity:.6;"></div>
<div class="a" style="left:1606px;top:38.5px;width:17px;height:925.5px;border-radius:8.5px;background:linear-gradient(90deg,#575757,#606060);border:1px solid #585858"></div>
<div class="a" style="left:1606px;top:38.5px;width:17px;height:571.5px;border-radius:8.5px;background:linear-gradient(90deg,#9a9a9a,#7a7a7a 70%,#707070);border:1px solid #5a5a5a"></div>
<div class="a" style="left:0;top:969px;width:1628px;height:32px;background:#727272;border-top:1px solid #808080"></div>
<div class="w menu" style="left:11px;top:973px;width:40px;height:25px;border-radius:5px 5px 5px 5px;padding:5px 0px 0;justify-content:flex-start;"></div>
<svg class="a" style="left:16.5px;top:976px;" width="19" height="19" viewBox="0 0 16 16"><path d="M8 1 L14.5 4 V11.5 L8 15 L1.5 11.5 V4 Z" fill="#d9d9d9" stroke="#222" stroke-width="1"/><path d="M8 1 L14.5 4 L8 7.2 L1.5 4 Z" fill="#fdfdfd"/><path d="M8 7.2 L14.5 4 V11.5 L8 15 Z" fill="#8c8c8c"/><path d="M1.5 4 L8 7.2 L14.5 4 M8 7.2 V15" stroke="#fff" stroke-width=".9" fill="none" opacity=".85"/><path d="M8 1 L14.5 4 V11.5 L8 15 L1.5 11.5 V4 Z" fill="none" stroke="#222" stroke-width="1"/></svg>
<svg class="ud" style="left:38.5px;top:977.8px;height:16px" viewBox="0 0 9 16"><path d="M4.5 0 L8.2 6.4 H0.8 Z M4.5 16 L8.2 9.6 H0.8 Z" fill="#c8c8c8" opacity=".92"/></svg>
<div class="lbl" style="left:66px;top:978.2px;color:#000;">View</div>
<div class="lbl" style="left:122.3px;top:978.2px;color:#000;">Select</div>
<div class="lbl" style="left:186px;top:978.2px;color:#000;">Add</div>
<div class="lbl" style="left:236px;top:978.2px;color:#000;">Object</div>
<div class="w menu" style="left:294px;top:973px;width:144px;height:25px;border-radius:5px 5px 5px 5px;padding:5px 0px 0;justify-content:flex-start;padding-left:30px;">Object Mode</div>
<svg class="a" style="left:302px;top:977.5px;" width="16" height="16" viewBox="0 0 16 16"><path d="M8 1 L14.5 4 V11.5 L8 15 L1.5 11.5 V4 Z" fill="#f4a94f" stroke="#5a3208" stroke-width="1"/><path d="M8 1 L14.5 4 L8 7.2 L1.5 4 Z" fill="#ffd9a8"/><path d="M8 7.2 L14.5 4 V11.5 L8 15 Z" fill="#e28a2b"/><path d="M1.5 4 L8 7.2 L14.5 4 M8 7.2 V15" stroke="#fff" stroke-width=".9" fill="none" opacity=".85"/><path d="M8 1 L14.5 4 V11.5 L8 15 L1.5 11.5 V4 Z" fill="none" stroke="#5a3208" stroke-width="1"/></svg>
<svg class="ud" style="left:425.5px;top:977.8px;height:16px" viewBox="0 0 9 16"><path d="M4.5 0 L8.2 6.4 H0.8 Z M4.5 16 L8.2 9.6 H0.8 Z" fill="#c8c8c8" opacity=".92"/></svg>
<div class="w menu" style="left:445px;top:973px;width:39px;height:25px;border-radius:5px 5px 5px 5px;padding:5px 0px 0;justify-content:flex-start;"></div>
<svg class="a" style="left:449px;top:975.5px;" width="20" height="20" viewBox="0 0 16 16"><circle cx="8" cy="8" r="6.8" fill="url(#gSph)" stroke="#2a2a2a" stroke-width=".8"/></svg>
<svg class="ud" style="left:471.5px;top:977.8px;height:16px" viewBox="0 0 9 16"><path d="M4.5 0 L8.2 6.4 H0.8 Z M4.5 16 L8.2 9.6 H0.8 Z" fill="#c8c8c8" opacity=".92"/></svg>
<div class="w menu" style="left:490px;top:973px;width:41px;height:25px;border-radius:5px 0px 0px 5px;padding:5px 0px 0;justify-content:flex-start;"></div>
<svg class="a" style="left:494px;top:975.5px;" width="20" height="20" viewBox="0 0 17 17"><circle cx="6" cy="5.5" r="4.6" fill="url(#gSph)" stroke="#2a2a2a" stroke-width=".8"/><circle cx="11" cy="11.5" r="4.6" fill="url(#gSph)" stroke="#2a2a2a" stroke-width=".8"/><rect x="6.4" y="6.6" width="3.6" height="3.6" fill="#b8d4ff" stroke="#1048c8" stroke-width="1.1"/></svg>
<svg class="ud" style="left:517.5px;top:977.8px;height:16px" viewBox="0 0 9 16"><path d="M4.5 0 L8.2 6.4 H0.8 Z M4.5 16 L8.2 9.6 H0.8 Z" fill="#c8c8c8" opacity=".92"/></svg>
<div class="w tog" style="left:529px;top:973px;width:26px;height:25px;border-radius:0px 5px 5px 0px;padding:5px 0px 0;justify-content:flex-start;background:#9c9c9c;"></div>
<svg class="a" style="left:532px;top:977px;" width="20" height="17" viewBox="0 0 20 17"><path d="M1 10 H19" stroke="#222" stroke-width="3.2"/><path d="M5.5 5.5 L1 10 L5.5 14.5 M14.5 5.5 L19 10 L14.5 14.5" stroke="#222" stroke-width="3.2" fill="none" stroke-linejoin="round" stroke-linecap="round"/><path d="M1.6 10 H18.4" stroke="#fff" stroke-width="1.5"/><path d="M5.5 5.8 L1.4 10 L5.5 14.2 M14.5 5.8 L18.6 10 L14.5 14.2" stroke="#fff" stroke-width="1.5" fill="none" stroke-linejoin="round" stroke-linecap="round"/><circle cx="4" cy="2" r="1.5" fill="#dfe9ff" stroke="#1c4fb0" stroke-width=".9"/><circle cx="10" cy="2" r="1.5" fill="#dfe9ff" stroke="#1c4fb0" stroke-width=".9"/><circle cx="16" cy="2" r="1.5" fill="#dfe9ff" stroke="#1c4fb0" stroke-width=".9"/></svg>
<div class="w menu" style="left:561px;top:973px;width:26px;height:25px;border-radius:5px 0px 0px 5px;padding:5px 0px 0;justify-content:flex-start;background:linear-gradient(#505050,#404040);"></div>
<svg class="a" style="left:564.5px;top:976.5px;" width="18" height="18" viewBox="0 0 18 18"><path d="M9 12 V2" stroke="#1d3f8e" stroke-width="3.4" stroke-linecap="round"/><path d="M9 12 V2" stroke="#5b93ff" stroke-width="2" stroke-linecap="round"/><path d="M9 12 L2 16" stroke="#7c1010" stroke-width="3.4" stroke-linecap="round"/><path d="M9 12 L2 16" stroke="#f04a3a" stroke-width="2" stroke-linecap="round"/><path d="M9 12 L16 16" stroke="#1e6a10" stroke-width="3.4" stroke-linecap="round"/><path d="M9 12 L16 16" stroke="#6fdc45" stroke-width="2" stroke-linecap="round"/><circle cx="9" cy="12" r="1.8" fill="#fff"/><rect x="8" y="1" width="2" height="2" fill="#fff"/></svg>
<div class="w sel" style="left:585px;top:973px;width:27px;height:25px;border-radius:0px 0px 0px 0px;padding:5px 0px 0;justify-content:flex-start;"></div>
<svg class="a" style="left:589.5px;top:976.5px;" width="18" height="18" viewBox="0 0 18 18"><path d="M2.5 15.5 L11 7 L8.5 4.5 L16.5 1.5 L13.5 9.5 L11 7" fill="#4d86e8" stroke="#16336e" stroke-width="3" stroke-linejoin="round" stroke-linecap="round"/><path d="M2.5 15.5 L11.5 6.5" stroke="#6fa2f6" stroke-width="1.6" stroke-linecap="round"/><path d="M8.8 4.6 L16.2 1.8 L13.4 9.2 Z" fill="#6fa2f6"/></svg>
<div class="w menu" style="left:610px;top:973px;width:27px;height:25px;border-radius:0px 0px 0px 0px;padding:5px 0px 0;justify-content:flex-start;background:linear-gradient(#505050,#404040);"></div>
<svg class="a" style="left:614.5px;top:976.5px;" width="18" height="18" viewBox="0 0 18 18"><path d="M3 15 C3 8 7 3.5 15 3" stroke="#2d4677" stroke-width="4" fill="none" stroke-linecap="round"/><path d="M3 15 C3 8 7 3.5 15 3" stroke="#5f86c8" stroke-width="2.2" fill="none" stroke-linecap="round"/></svg>
<div class="w menu" style="left:635px;top:973px;width:27px;height:25px;border-radius:0px 0px 0px 0px;padding:5px 0px 0;justify-content:flex-start;background:linear-gradient(#505050,#404040);"></div>
<svg class="a" style="left:639.5px;top:976.5px;" width="18" height="18" viewBox="0 0 18 18"><path d="M2.5 15.5 L10 8" stroke="#2d4677" stroke-width="4" stroke-linecap="round"/><path d="M2.5 15.5 L10 8" stroke="#5f86c8" stroke-width="2.2" stroke-linecap="round"/><rect x="8.5" y="2.5" width="7" height="7" fill="#5f86c8" stroke="#2d4677" stroke-width="1.2"/></svg>
<div class="w menu" style="left:660px;top:973px;width:91px;height:25px;border-radius:0px 5px 5px 0px;padding:5px 10px 0;justify-content:flex-start;">Global</div>
<svg class="ud" style="left:738.3px;top:977.8px;height:16px" viewBox="0 0 9 16"><path d="M4.5 0 L8.2 6.4 H0.8 Z M4.5 16 L8.2 9.6 H0.8 Z" fill="#c8c8c8" opacity=".92"/></svg>
<div class="w" style="left:757.4px;top:973.5px;width:59.6px;height:24px;border-radius:5px;background:#999;padding:0"></div>
<div class="a" style="left:769.2px;top:974.5px;width:1px;height:22px;background:#3a3a3a"></div><div class="a" style="left:781px;top:974.5px;width:1px;height:22px;background:#3a3a3a"></div><div class="a" style="left:792.8px;top:974.5px;width:1px;height:22px;background:#3a3a3a"></div><div class="a" style="left:804.6px;top:974.5px;width:1px;height:22px;background:#3a3a3a"></div><div class="a" style="left:758.4px;top:985.0px;width:57.6px;height:1px;background:#3a3a3a"></div>
<div class="w" style="left:823.4px;top:973.5px;width:59.6px;height:24px;border-radius:5px;background:#999;padding:0"></div>
<div class="a" style="left:835.2px;top:974.5px;width:1px;height:22px;background:#3a3a3a"></div><div class="a" style="left:847px;top:974.5px;width:1px;height:22px;background:#3a3a3a"></div><div class="a" style="left:858.8px;top:974.5px;width:1px;height:22px;background:#3a3a3a"></div><div class="a" style="left:870.6px;top:974.5px;width:1px;height:22px;background:#3a3a3a"></div><div class="a" style="left:824.4px;top:985.0px;width:57.6px;height:1px;background:#3a3a3a"></div>
<div class="a" style="left:760.2px;top:976.0px;width:6px;height:6px;border-radius:3px;background:#f5a94a;border:1px solid #8a4a10"></div>
<div class="w menu" style="left:889px;top:973px;width:25px;height:25px;border-radius:5px 5px 5px 5px;padding:5px 0px 0;justify-content:flex-start;background:linear-gradient(#6a6a6a,#565656);"></div>
<svg class="a" style="left:892px;top:976.5px;" width="19" height="19" viewBox="0 0 18 18"><rect x="1.5" y="1.5" width="11" height="13" fill="#bdbdbd" stroke="#222"/><rect x="2.5" y="11" width="9" height="2.5" fill="#eee"/><path d="M13 6 a2.6 2.6 0 0 1 0 5.2 M13 10.5 a2.6 2.6 0 0 1 0 5.2" stroke="#222" stroke-width="3" fill="none"/><path d="M13 6 a2.6 2.6 0 0 1 0 5.2 M13 10.5 a2.6 2.6 0 0 1 0 5.2 M13 6 a2.6 2.6 0 0 0 0 5.2 M13 10.5 a2.6 2.6 0 0 0 0 5.2" stroke="#f0f0f0" stroke-width="1.3" fill="none"/></svg>
<div class="w tog" style="left:920px;top:973px;width:25px;height:25px;border-radius:5px 5px 5px 5px;padding:5px 0px 0;justify-content:flex-start;background:#9c9c9c;"></div>
<svg class="a" style="left:924px;top:977px;" width="17" height="17" viewBox="0 0 17 17"><circle cx="8.5" cy="8.5" r="6.2" fill="none" stroke="#777" stroke-width="1.6"/><circle cx="8.5" cy="8.5" r="2.6" fill="#8a8a8a" stroke="#777" stroke-width="1.2"/></svg>
<div class="w tog" style="left:951px;top:973px;width:26px;height:25px;border-radius:5px 0px 0px 5px;padding:5px 0px 0;justify-content:flex-start;background:#9c9c9c;"></div>
<svg class="a" style="left:954.5px;top:976.5px;" width="18" height="18" viewBox="0 0 18 18"><g transform="rotate(-135 9 9)"><path d="M4.500 3 V9.500 A4.500 4.500 0 0 0 13.500 9.500 V3" fill="none" stroke="#5a5a5a" stroke-width="4.600"/><path d="M4.500 3.500 V9.500 A4.500 4.500 0 0 0 13.500 9.500 V3.500" fill="none" stroke="#a4a4a4" stroke-width="2.600"/></g></svg>
<div class="w menu" style="left:975px;top:973px;width:42px;height:25px;border-radius:0px 0px 0px 0px;padding:5px 0px 0;justify-content:flex-start;"></div>
<svg class="a" style="left:980px;top:977.5px;" width="18" height="16" viewBox="0 0 18 16"><path d="M1 2.5 V13.5 M17 2.5 V13.5 M4.5 4.5 V11.5 M13.500 4.5 V11.5 M1 8 H17" stroke="#e8e8e8" stroke-width="1.3"/><path d="M9 1.5 V14.5" stroke="#2a6cf0" stroke-width="3"/><path d="M9 2.5 V13.5" stroke="#9cc2ff" stroke-width="1.2"/></svg>
<svg class="ud" style="left:1002px;top:977.8px;height:16px" viewBox="0 0 9 16"><path d="M4.5 0 L8.2 6.4 H0.8 Z M4.5 16 L8.2 9.6 H0.8 Z" fill="#c8c8c8" opacity=".92"/></svg>
<div class="w tog" style="left:1015px;top:973px;width:26px;height:25px;border-radius:0px 5px 5px 0px;padding:5px 0px 0;justify-content:flex-start;background:#9c9c9c;"></div>
<svg class="a" style="left:1019px;top:976.5px;" width="19" height="19" viewBox="0 0 19 19"><path d="M9 5 V17 M14 5 V17 M4 9 H18 M4 14 H18" stroke="#333" stroke-width="1.2"/><circle cx="5.5" cy="5" r="4.2" fill="#e8f0ff" stroke="#3467c9" stroke-width="1.2"/><circle cx="5.5" cy="5" r="1.9" fill="#2a62d8"/></svg>
<div class="w tog" style="left:1048px;top:973px;width:25px;height:25px;border-radius:5px 0px 0px 5px;padding:5px 0px 0;justify-content:flex-start;background:#9c9c9c;"></div>
<svg class="a" style="left:1051px;top:976px;" width="19" height="19" viewBox="0 0 19 19"><rect x="1.5" y="6" width="15" height="10.5" rx="1" fill="#c9c9c9" stroke="#222"/><rect x="3" y="4" width="5" height="2.5" fill="#888" stroke="#222" stroke-width=".8"/><circle cx="10" cy="11.500" r="3.8" fill="#3a2020" stroke="#222"/><circle cx="10" cy="11.5" r="1.8" fill="#a33"/><circle cx="15.500" cy="4" r="3.200" fill="#fff2a0" stroke="#b8951a" stroke-width=".8"/></svg>
<div class="w tog" style="left:1072px;top:973px;width:25px;height:25px;border-radius:0px 5px 5px 0px;padding:5px 0px 0;justify-content:flex-start;background:#9c9c9c;"></div>
<svg class="a" style="left:1075px;top:976px;" width="19" height="19" viewBox="0 0 19 19"><rect x="3" y="9" width="14" height="8.500" fill="#3a3a3a" stroke="#111"/><path d="M2 8 L15.500 2.500 L16.500 5 L3 10.500Z" fill="#e8e8e8" stroke="#111" stroke-width=".9"/><path d="M5.500 6.700 l1.700 2.200 M9 5.300 l1.700 2.200 M12.500 3.900 l1.700 2.200" stroke="#111" stroke-width="1.6"/><rect x="1" y="8" width="3.500" height="4.500" fill="#5b8ee6" stroke="#16336e" stroke-width=".8"/><path d="M5 13 H15" stroke="#999" stroke-width="1"/></svg>
<div class="a" style="left:1627px;top:33px;width:1px;height:968px;background:#8a8a8a"></div>
<div class="a" style="left:1628px;top:33px;width:1px;height:968px;background:#0c0c0c"></div>
<div class="a" style="left:1629px;top:33px;width:291px;height:968px;background:#727272"></div>
<div class="a" style="left:1629px;top:64px;width:291px;height:1px;background:#8c8c8c"></div>
<div class="a" style="left:1629px;top:1000px;width:291px;height:1px;background:#868686"></div>
<div class="a" style="left:1919px;top:0;width:1px;height:1001px;background:#888"></div>
<div class="w menu" style="left:1639px;top:38px;width:40px;height:25px;border-radius:5px 5px 5px 5px;padding:5px 0px 0;justify-content:flex-start;"></div>
<svg class="a" style="left:1645px;top:41.5px;" width="17" height="17" viewBox="0 0 16 17"><rect x="1" y="1.5" width="14" height="5.500" rx="2.700" fill="#555" stroke="#eee" stroke-width="1.2"/><rect x="9" y="2.400" width="5.500" height="3.700" rx="1.800" fill="#eee"/><rect x="1" y="10" width="14" height="5.500" rx="2.700" fill="#eee" stroke="#eee" stroke-width="1.2"/><path d="M2.200 12.700 l2 -1.700 v3.400z M13.800 12.700 l-2 -1.700 v3.400z" fill="#222"/></svg>
<svg class="ud" style="left:1666.5px;top:42.3px;height:16px" viewBox="0 0 9 16"><path d="M4.5 0 L8.2 6.4 H0.8 Z M4.5 16 L8.2 9.6 H0.8 Z" fill="#c8c8c8" opacity=".92"/></svg>
<div class="w menu" style="left:1689px;top:38px;width:26px;height:25px;border-radius:5px 0px 0px 5px;padding:5px 0px 0;justify-content:flex-start;background:linear-gradient(#555,#424242);"></div>
<div class="w menu" style="left:1713px;top:38px;width:27px;height:25px;border-radius:0px 0px 0px 0px;padding:5px 0px 0;justify-content:flex-start;background:linear-gradient(#555,#424242);"></div>
<div class="w menu" style="left:1738px;top:38px;width:27px;height:25px;border-radius:0px 0px 0px 0px;padding:5px 0px 0;justify-content:flex-start;background:linear-gradient(#555,#424242);"></div>
<div class="w menu" style="left:1763px;top:38px;width:27px;height:25px;border-radius:0px 0px 0px 0px;padding:5px 0px 0;justify-content:flex-start;background:linear-gradient(#555,#424242);"></div>
<div class="w menu" style="left:1788px;top:38px;width:27px;height:25px;border-radius:0px 0px 0px 0px;padding:5px 0px 0;justify-content:flex-start;background:linear-gradient(#555,#424242);"></div>
<div class="w menu" style="left:1813px;top:38px;width:27px;height:25px;border-radius:0px 0px 0px 0px;padding:5px 0px 0;justify-content:flex-start;background:linear-gradient(#555,#424242);"></div>
<div class="w sel" style="left:1838px;top:38px;width:27px;height:25px;border-radius:0px 0px 0px 0px;padding:5px 0px 0;justify-content:flex-start;"></div>
<div class="w menu" style="left:1863px;top:38px;width:27px;height:25px;border-radius:0px 0px 0px 0px;padding:5px 0px 0;justify-content:flex-start;background:linear-gradient(#555,#424242);"></div>
<div class="w menu" style="left:1888px;top:38px;width:27px;height:25px;border-radius:0px 0px 0px 0px;padding:5px 0px 0;justify-content:flex-start;background:linear-gradient(#555,#424242);"></div>
<div class="w menu" style="left:1913px;top:38px;width:27px;height:25px;border-radius:0px 0px 0px 0px;padding:5px 0px 0;justify-content:flex-start;background:linear-gradient(#555,#424242);"></div>
<svg class="a" style="left:1691.7px;top:39.5px;" width="21" height="21" viewBox="0 0 18 18"><rect x="1.500" y="4.500" width="14" height="10" rx="1" fill="#b9b9b9" stroke="#222"/><rect x="3" y="2.500" width="4.500" height="2.500" fill="#888" stroke="#222" stroke-width=".8"/><circle cx="10" cy="10" r="3.600" fill="#2c2224" stroke="#222"/><circle cx="10.500" cy="10.500" r="1.500" fill="#7a3a3a"/><rect x="4" y="6.500" width="1.500" height="1.200" fill="#e33"/></svg>
<svg class="a" style="left:1715.9px;top:39.5px;" width="21" height="21" viewBox="0 0 18 18"><rect x="5" y="5" width="10" height="10" fill="#c8b98a" stroke="#444" transform="rotate(12 10 10)"/><rect x="1.500" y="1.500" width="10" height="10" fill="#aebfd8" stroke="#333"/><rect x="6" y="3" width="3" height="5" fill="#3b6fd0"/><circle cx="5" cy="8" r="1.800" fill="#eee" stroke="#333" stroke-width=".6"/><rect x="2.300" y="2.300" width="1.600" height="1.600" fill="#f2ee70"/></svg>
<svg class="a" style="left:1741.7px;top:40.5px;" width="19" height="19" viewBox="0 0 16 16"><circle cx="3" cy="3" r="2.6" fill="#e9e56a" opacity=".55"/><rect x="2" y="2" width="2.2" height="2.2" fill="#f4f08a"/><path d="M8.5 3.5 V11 A3 1.4 0 0 0 14.5 11 V3.5Z" fill="url(#gCyl)" stroke="#1b3775" stroke-width=".7"/><ellipse cx="11.5" cy="3.5" rx="3" ry="1.4" fill="#bcd4fb" stroke="#1b3775" stroke-width=".6"/><circle cx="6" cy="11" r="3.9" fill="url(#gSph)" stroke="#222" stroke-width=".9"/></svg>
<svg class="a" style="left:1765.9px;top:39.5px;" width="21" height="21" viewBox="0 0 18 18"><circle cx="8.500" cy="8.500" r="6.800" fill="url(#gEarth)" stroke="#1a2d5a" stroke-width=".8"/><path d="M4 5 q3 -2 4 0 q1 3 -2 4 q-3 1 -2 -4z M10 9 q3 0 3 2 q-1 3 -3 2z M10 3 q2 0 3 2 l-2 .5z" fill="#5a7844"/></svg>
<svg class="a" style="left:1791.4px;top:41px;" width="19" height="19" viewBox="0 0 16 16"><path d="M8 1 L14.5 4 V11.5 L8 15 L1.5 11.5 V4 Z" fill="#c98f58" stroke="#4a2c10" stroke-width="1"/><path d="M8 1 L14.5 4 L8 7.2 L1.5 4 Z" fill="#e9c9a4"/><path d="M8 7.2 L14.5 4 V11.5 L8 15 Z" fill="#a8703a"/><path d="M1.5 4 L8 7.2 L14.5 4 M8 7.2 V15" stroke="#fff" stroke-width=".9" fill="none" opacity=".85"/><path d="M8 1 L14.5 4 V11.5 L8 15 L1.5 11.5 V4 Z" fill="none" stroke="#4a2c10" stroke-width="1"/></svg>
<svg class="a" style="left:1815.9px;top:39.5px;" width="21" height="21" viewBox="0 0 18 18"><g transform="rotate(-38 9 9)"><rect x="1.500" y="6.500" width="8.500" height="5" rx="2.500" fill="none" stroke="#222" stroke-width="3"/><rect x="8" y="6.500" width="8.500" height="5" rx="2.500" fill="none" stroke="#222" stroke-width="3"/><rect x="1.500" y="6.500" width="8.500" height="5" rx="2.500" fill="none" stroke="#a2a2a2" stroke-width="1.500"/><rect x="8" y="6.500" width="8.500" height="5" rx="2.500" fill="none" stroke="#a2a2a2" stroke-width="1.500"/></g></svg>
<svg class="a" style="left:1841.2px;top:39.5px;" width="21" height="21" viewBox="0 0 18 18"><path d="M3 15 L10.500 7.500 A3.600 3.600 0 0 1 15.500 2.800 L13 5.300 L13.700 6.300 L14.700 7 L17.200 4.500 A3.600 3.600 0 0 1 12.500 9.500 L5 17 Z" fill="#fff" stroke="#16336e" stroke-width="1"/></svg>
<svg class="a" style="left:1865.9px;top:39.5px;" width="21" height="21" viewBox="0 0 18 18"><path d="M3.500 4 H14.500 L9 14.500 Z" fill="none" stroke="#2a2a2a" stroke-width="2.600"/><path d="M3.500 4 H14.500 L9 14.500 Z" fill="none" stroke="#8e8e8e" stroke-width="1.500"/><rect x="1.800" y="2.300" width="3.400" height="3.400" fill="#d4d4d4" stroke="#222" stroke-width=".7"/><rect x="12.800" y="2.300" width="3.400" height="3.400" fill="#d4d4d4" stroke="#222" stroke-width=".7"/><rect x="7.300" y="13" width="3.400" height="3.400" fill="#d4d4d4" stroke="#222" stroke-width=".7"/></svg>
<svg class="a" style="left:1890.9px;top:39.5px;" width="21" height="21" viewBox="0 0 18 18"><circle cx="9" cy="9" r="7" fill="url(#gMat)" stroke="#222" stroke-width=".8"/><path d="M9 9 L9 2 A7 7 0 0 1 16 9Z M9 9 L9 16 A7 7 0 0 1 2 9Z" fill="#000" opacity=".22"/></svg>
<svg class="a" style="left:1915.9px;top:39.5px;" width="21" height="21" viewBox="0 0 18 18"><rect x="1.500" y="2" width="15" height="14" fill="#c9a8a0" stroke="#222"/></svg>
<svg class="a" style="left:1641.5px;top:76.5px;" width="20" height="20" viewBox="0 0 20 20"><path d="M1.500 18.500 L7.500 12.500" stroke="#222" stroke-width="2.800" stroke-linecap="round"/><path d="M1.500 18.500 L7.500 12.500" stroke="#e8e8e8" stroke-width="1.200" stroke-linecap="round"/><path d="M4.200 9.800 L10.200 15.800 Q11.800 13.500 11.500 12 L15.500 8.500 Q17.500 9 19 7.500 L12.500 1 Q11 2.500 11.500 4.500 L8 8.500 Q6.500 8.200 4.200 9.800 Z" fill="#d4d4d4" stroke="#222" stroke-width="1.100" stroke-linejoin="round"/><path d="M9 8.500 L12.500 4.500 M13.500 2.500 L17.500 6.500" stroke="#fff" stroke-width="1.300" stroke-linecap="round"/></svg>
<svg class="a" style="left:1668px;top:78.5px;" width="18" height="18" viewBox="0 0 16 16"><circle cx="3" cy="3" r="2.6" fill="#e9e56a" opacity=".55"/><rect x="2" y="2" width="2.2" height="2.2" fill="#f4f08a"/><path d="M8.5 3.5 V11 A3 1.4 0 0 0 14.5 11 V3.5Z" fill="url(#gCyl)" stroke="#1b3775" stroke-width=".7"/><ellipse cx="11.5" cy="3.5" rx="3" ry="1.4" fill="#bcd4fb" stroke="#1b3775" stroke-width=".6"/><circle cx="6" cy="11" r="3.9" fill="url(#gSph)" stroke="#222" stroke-width=".9"/></svg>
<svg class="a" style="left:1695px;top:85.3px" width="5" height="5" viewBox="0 0 10 10"><path d="M0.5 0 V10 L10 5 Z" fill="#2e2e2e"/></svg>
<svg class="a" style="left:1718.3px;top:79.5px;" width="18" height="18" viewBox="0 0 16 16"><path d="M8 1 L14.5 4 V11.5 L8 15 L1.5 11.5 V4 Z" fill="#f4a94f" stroke="#5a3208" stroke-width="1"/><path d="M8 1 L14.5 4 L8 7.2 L1.5 4 Z" fill="#ffd9a8"/><path d="M8 7.2 L14.5 4 V11.5 L8 15 Z" fill="#e28a2b"/><path d="M1.5 4 L8 7.2 L14.5 4 M8 7.2 V15" stroke="#fff" stroke-width=".9" fill="none" opacity=".85"/><path d="M8 1 L14.5 4 V11.5 L8 15 L1.5 11.5 V4 Z" fill="none" stroke="#5a3208" stroke-width="1"/></svg>
<div class="lbl" style="left:1744.5px;top:78.7px;color:#000;">Fzg. Rahmen</div>
<div class="w menu" style="left:1639px;top:120px;width:271px;height:25px;border-radius:5px 5px 5px 5px;padding:5px 9.5px 0;justify-content:flex-start;">Add Modifier</div>
<svg class="ud" style="left:1897.5px;top:124.8px;height:16px" viewBox="0 0 9 16"><path d="M4.5 0 L8.2 6.4 H0.8 Z M4.5 16 L8.2 9.6 H0.8 Z" fill="#c8c8c8" opacity=".92"/></svg>
<svg class="a" style="left:0px;top:17px" width="15" height="15" viewBox="0 0 15 15"><path d="M0 1 L14 15" stroke="#2c2c2c" stroke-width="1.5"/><path d="M0 2.6 L12.4 15" stroke="#a8a8a8" stroke-width="1.1"/><path d="M0 5 L10 15" stroke="#2c2c2c" stroke-width="1.5"/><path d="M0 6.6 L8.4 15" stroke="#a8a8a8" stroke-width="1.1"/><path d="M0 9 L6 15" stroke="#2c2c2c" stroke-width="1.5"/><path d="M0 10.6 L4.4 15" stroke="#a8a8a8" stroke-width="1.1"/></svg>
<svg class="a" style="left:1904px;top:1px" width="15" height="15" viewBox="0 0 15 15"><path d="M1 0 L15 14" stroke="#2c2c2c" stroke-width="1.5"/><path d="M2.6 0 L15 12.4" stroke="#a8a8a8" stroke-width="1.1"/><path d="M5 0 L15 10" stroke="#2c2c2c" stroke-width="1.5"/><path d="M6.6 0 L15 8.4" stroke="#a8a8a8" stroke-width="1.1"/><path d="M9 0 L15 6" stroke="#2c2c2c" stroke-width="1.5"/><path d="M10.6 0 L15 4.4" stroke="#a8a8a8" stroke-width="1.1"/></svg>
<svg class="a" style="left:1612px;top:33px" width="15" height="15" viewBox="0 0 15 15"><path d="M1 0 L15 14" stroke="#2c2c2c" stroke-width="1.5"/><path d="M2.6 0 L15 12.4" stroke="#a8a8a8" stroke-width="1.1"/><path d="M5 0 L15 10" stroke="#2c2c2c" stroke-width="1.5"/><path d="M6.6 0 L15 8.4" stroke="#a8a8a8" stroke-width="1.1"/><path d="M9 0 L15 6" stroke="#2c2c2c" stroke-width="1.5"/><path d="M10.6 0 L15 4.4" stroke="#a8a8a8" stroke-width="1.1"/></svg>
<svg class="a" style="left:0px;top:986px" width="15" height="15" viewBox="0 0 15 15"><path d="M0 1 L14 15" stroke="#2c2c2c" stroke-width="1.5"/><path d="M0 2.6 L12.4 15" stroke="#a8a8a8" stroke-width="1.1"/><path d="M0 5 L10 15" stroke="#2c2c2c" stroke-width="1.5"/><path d="M0 6.6 L8.4 15" stroke="#a8a8a8" stroke-width="1.1"/><path d="M0 9 L6 15" stroke="#2c2c2c" stroke-width="1.5"/><path d="M0 10.6 L4.4 15" stroke="#a8a8a8" stroke-width="1.1"/></svg>
<svg class="a" style="left:1904px;top:33.5px" width="15" height="15" viewBox="0 0 15 15"><path d="M1 0 L15 14" stroke="#2c2c2c" stroke-width="1.5"/><path d="M2.6 0 L15 12.4" stroke="#a8a8a8" stroke-width="1.1"/><path d="M5 0 L15 10" stroke="#2c2c2c" stroke-width="1.5"/><path d="M6.6 0 L15 8.4" stroke="#a8a8a8" stroke-width="1.1"/><path d="M9 0 L15 6" stroke="#2c2c2c" stroke-width="1.5"/><path d="M10.6 0 L15 4.4" stroke="#a8a8a8" stroke-width="1.1"/></svg>
<svg class="a" style="left:1629px;top:986px" width="15" height="15" viewBox="0 0 15 15"><path d="M0 1 L14 15" stroke="#2c2c2c" stroke-width="1.5"/><path d="M0 2.6 L12.4 15" stroke="#a8a8a8" stroke-width="1.1"/><path d="M0 5 L10 15" stroke="#2c2c2c" stroke-width="1.5"/><path d="M0 6.6 L8.4 15" stroke="#a8a8a8" stroke-width="1.1"/><path d="M0 9 L6 15" stroke="#2c2c2c" stroke-width="1.5"/><path d="M0 10.6 L4.4 15" stroke="#a8a8a8" stroke-width="1.1"/></svg></div></body></html>
